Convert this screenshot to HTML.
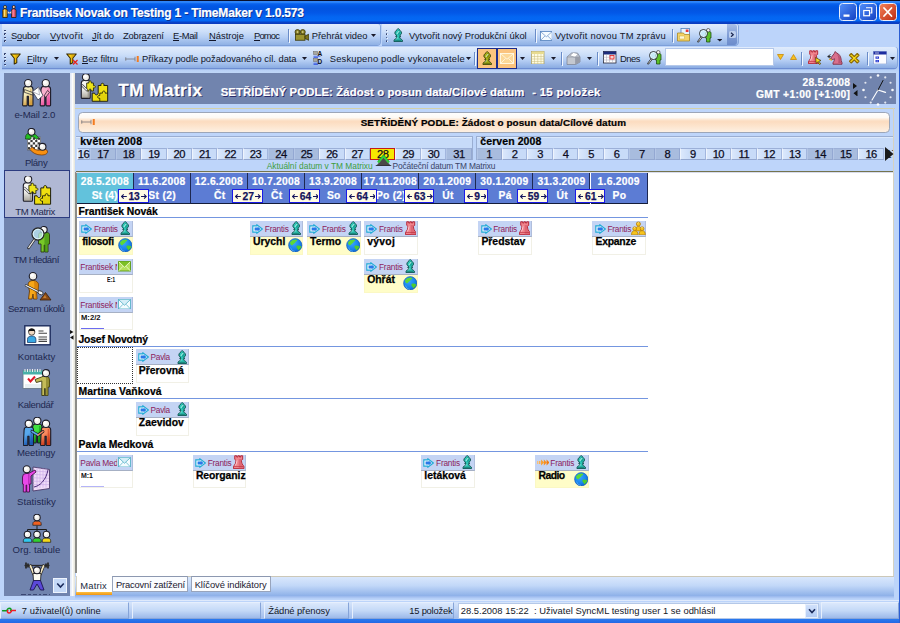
<!DOCTYPE html>
<html lang="cs"><head><meta charset="utf-8"><title>TimeMaker</title><style>
html,body{margin:0;padding:0}
body{width:900px;height:623px;overflow:hidden;position:relative;background:#bcd4fa;font-family:"Liberation Sans",sans-serif;font-size:9.4px}
#w{position:absolute;left:0;top:0;width:900px;height:623px;overflow:hidden}
#w div,#w span.t,#w svg{position:absolute}
#w span.t{white-space:nowrap}
u{text-decoration:underline}
</style></head><body><div id="w">
<div style="left:0px;top:0px;width:900px;height:23.7px;background:linear-gradient(#060a18 0,#0a1238 .8px,#2a80f8 1.300px,#3a90ff 2px,#1470f2 3px,#0a60ec 4px,#0058e6 6px,#0254e0 9px,#0358e8 13px,#0466f2 17px,#0468f4 20.500px,#0650d8 21.700px,#0a3cc0 22.800px,#0a3cc0 23.700px)"></div>
<span class="t" style="font-size:12px;line-height:14px;color:#fff;font-weight:bold;-webkit-text-stroke:.22px;letter-spacing:-0.170px;left:20px;top:5.899999999999999px;text-shadow:1px 1px 0 #0a2f8f;">Frantisek Novak on Testing 1 - TimeMaker v 1.0.573</span>
<div style="left:839px;top:3px;width:17.5px;height:18px;background:linear-gradient(135deg,#4a86f4 10%,#1a48c8 90%);border:1.200px solid #e8eefc;border-radius:3.500px;box-sizing:border-box"></div>
<svg style="left:839px;top:3px;" width="17.5" height="18" viewBox="0 0 35 36"><rect x="9" y="23" width="12" height="4.500" fill="#fff"/></svg>
<div style="left:859.2px;top:3px;width:17.5px;height:18px;background:linear-gradient(135deg,#4a86f4 10%,#1a48c8 90%);border:1.200px solid #e8eefc;border-radius:3.500px;box-sizing:border-box"></div>
<svg style="left:859.2px;top:3px;" width="17.5" height="18" viewBox="0 0 35 36"><path d="M14 9.500h11.500v10.500h-3" fill="none" stroke="#fff" stroke-width="2.400"/><rect x="9.500" y="15" width="11.500" height="10.500" fill="none" stroke="#fff" stroke-width="2.400"/></svg>
<div style="left:879.4px;top:3px;width:17.5px;height:18px;background:linear-gradient(135deg,#ee7850 10%,#c2341a 90%);border:1.200px solid #e8eefc;border-radius:3.500px;box-sizing:border-box"></div>
<svg style="left:879.4px;top:3px;" width="17.5" height="18" viewBox="0 0 35 36"><path d="M10 10l15 16M25 10l-15 16" stroke="#fff" stroke-width="3.600" stroke-linecap="round"/></svg>
<svg style="left:1.5px;top:5px;" width="15" height="13.5" viewBox="0 0 30 27"><g stroke="#2a1c08" stroke-width="1.600"><circle cx="6" cy="4" r="3" fill="#f8e8b0"/><path d="M1.500 10.500q0-3 4.500-3t4.500 3v14.500h-9z" fill="#e0a828"/><circle cx="23.500" cy="4" r="3" fill="#f8c8c0"/><path d="M19 10.500q0-3 4.500-3t4.500 3v14.500h-9z" fill="#e05870"/></g><path d="M5 9v14" stroke="#fff0a0" stroke-width="1.500"/><path d="M22.500 9v14" stroke="#f8a0b0" stroke-width="1.500"/><path d="M11.500 12l3.500 3 3.500-3v5h-7z" fill="#f4f4f8" stroke="#667" stroke-width=".8"/></svg>
<div style="left:0px;top:23.7px;width:900px;height:24px;background:#bcd4fa"></div>
<div style="left:0px;top:47px;width:900px;height:25.5px;background:linear-gradient(#bcd4fa 0%,#b2ccf5 80%,#c0d7f8 100%)"></div>
<div style="left:1.5px;top:23.7px;width:378.5px;height:21.5px;background:linear-gradient(#e1ecfc 0%,#cddff9 35%,#b4cdf3 65%,#8fb1e5 100%);border-radius:0 3px 3px 0;box-shadow:0 1px 0 #7d9fd9,1px 0 0 #86a6dc"></div>
<div style="left:381.5px;top:23.7px;width:356px;height:21.5px;background:linear-gradient(#e1ecfc 0%,#cddff9 35%,#b4cdf3 65%,#8fb1e5 100%);border-radius:0 3px 3px 0;box-shadow:0 1px 0 #7d9fd9,1px 0 0 #86a6dc"></div>
<div style="left:1.5px;top:47.3px;width:895.5px;height:20.4px;background:linear-gradient(#e1ecfc 0%,#cddff9 35%,#b4cdf3 65%,#8aace2 100%);border-radius:0 3px 3px 0;box-shadow:0 1.300px 0 #6e8ed2,1px 0 0 #86a6dc"></div>
<div style="left:17.01px;top:39.90px;width:5.23px;height:.9px;background:#12162a"></div>
<span class="t" style="font-size:9.4px;line-height:11px;color:#12162a;letter-spacing:-0.263px;left:11px;top:29.799999999999997px;">Soubor</span>
<div style="left:50.00px;top:39.90px;width:6.27px;height:.9px;background:#12162a"></div>
<span class="t" style="font-size:9.4px;line-height:11px;color:#12162a;letter-spacing:0.287px;left:50px;top:29.799999999999997px;">Vytvořit</span>
<div style="left:92.00px;top:39.90px;width:4.70px;height:.9px;background:#12162a"></div>
<span class="t" style="font-size:9.4px;line-height:11px;color:#12162a;letter-spacing:-0.198px;left:92px;top:29.799999999999997px;">Jít do</span>
<div style="left:141.67px;top:39.90px;width:5.23px;height:.9px;background:#12162a"></div>
<span class="t" style="font-size:9.4px;line-height:11px;color:#12162a;letter-spacing:-0.166px;left:123px;top:29.799999999999997px;">Zobrazení</span>
<div style="left:173.00px;top:39.90px;width:6.27px;height:.9px;background:#12162a"></div>
<span class="t" style="font-size:9.4px;line-height:11px;color:#12162a;letter-spacing:-0.327px;left:173px;top:29.799999999999997px;">E-Mail</span>
<div style="left:209.00px;top:39.90px;width:6.79px;height:.9px;background:#12162a"></div>
<span class="t" style="font-size:9.4px;line-height:11px;color:#12162a;letter-spacing:-0.000px;left:209px;top:29.799999999999997px;">Nástroje</span>
<div style="left:254.00px;top:39.90px;width:6.27px;height:.9px;background:#12162a"></div>
<span class="t" style="font-size:9.4px;line-height:11px;color:#12162a;letter-spacing:-0.814px;left:254px;top:29.799999999999997px;">Pomoc</span>
<span class="t" style="font-size:9.4px;line-height:11px;color:#12162a;letter-spacing:-0.009px;left:311.7px;top:29.799999999999997px;">Přehrát video</span>
<span class="t" style="font-size:9.4px;line-height:11px;color:#12162a;letter-spacing:-0.009px;left:409px;top:29.799999999999997px;">Vytvořit nový Produkční úkol</span>
<span class="t" style="font-size:9.4px;line-height:11px;color:#12162a;letter-spacing:0.215px;left:555px;top:29.799999999999997px;">Vytvořit novou TM zprávu</span>
<div style="left:27.00px;top:62.90px;width:5.74px;height:.9px;background:#12162a"></div>
<span class="t" style="font-size:9.4px;line-height:11px;color:#12162a;letter-spacing:0.028px;left:27px;top:52.8px;">Filtry</span>
<div style="left:82.00px;top:62.90px;width:6.27px;height:.9px;background:#12162a"></div>
<span class="t" style="font-size:9.4px;line-height:11px;color:#12162a;letter-spacing:-0.063px;left:82px;top:52.8px;">Bez filtru</span>
<span class="t" style="font-size:9.4px;line-height:11px;color:#12162a;letter-spacing:-0.051px;left:142px;top:52.8px;">Příkazy podle požadovaného cíl. data</span>
<span class="t" style="font-size:9.4px;line-height:11px;color:#12162a;letter-spacing:0.191px;left:329.7px;top:52.8px;">Seskupeno podle vykonavatele</span>
<span class="t" style="font-size:9.4px;line-height:11px;color:#12162a;letter-spacing:-0.515px;left:620px;top:52.8px;">Dnes</span>
<div style="left:665.3px;top:48.3px;width:108.7px;height:17.7px;background:#fff;border:1px solid #b4c8ea;box-sizing:border-box"></div>
<div style="left:477px;top:48px;width:20px;height:21px;background:#fbc47e;border:1px solid #1c2c8c;box-sizing:border-box"></div>
<div style="left:497px;top:48px;width:20px;height:21px;background:#fbc47e;border:1px solid #1c2c8c;box-sizing:border-box"></div>
<div style="left:3.8px;top:29.5px;width:1.8px;height:1.8px;background:#1c2858;border-radius:.4px"></div>
<div style="left:4.8px;top:30.5px;width:1.2px;height:1.2px;background:#f4f8ff;opacity:.9"></div>
<div style="left:3.8px;top:33.0px;width:1.8px;height:1.8px;background:#1c2858;border-radius:.4px"></div>
<div style="left:4.8px;top:34.0px;width:1.2px;height:1.2px;background:#f4f8ff;opacity:.9"></div>
<div style="left:3.8px;top:36.5px;width:1.8px;height:1.8px;background:#1c2858;border-radius:.4px"></div>
<div style="left:4.8px;top:37.5px;width:1.2px;height:1.2px;background:#f4f8ff;opacity:.9"></div>
<div style="left:3.8px;top:40.0px;width:1.8px;height:1.8px;background:#1c2858;border-radius:.4px"></div>
<div style="left:4.8px;top:41.0px;width:1.2px;height:1.2px;background:#f4f8ff;opacity:.9"></div>
<div style="left:385.5px;top:29.5px;width:1.8px;height:1.8px;background:#1c2858;border-radius:.4px"></div>
<div style="left:386.5px;top:30.5px;width:1.2px;height:1.2px;background:#f4f8ff;opacity:.9"></div>
<div style="left:385.5px;top:33.0px;width:1.8px;height:1.8px;background:#1c2858;border-radius:.4px"></div>
<div style="left:386.5px;top:34.0px;width:1.2px;height:1.2px;background:#f4f8ff;opacity:.9"></div>
<div style="left:385.5px;top:36.5px;width:1.8px;height:1.8px;background:#1c2858;border-radius:.4px"></div>
<div style="left:386.5px;top:37.5px;width:1.2px;height:1.2px;background:#f4f8ff;opacity:.9"></div>
<div style="left:385.5px;top:40.0px;width:1.8px;height:1.8px;background:#1c2858;border-radius:.4px"></div>
<div style="left:386.5px;top:41.0px;width:1.2px;height:1.2px;background:#f4f8ff;opacity:.9"></div>
<div style="left:3.8px;top:53.0px;width:1.8px;height:1.8px;background:#1c2858;border-radius:.4px"></div>
<div style="left:4.8px;top:54.0px;width:1.2px;height:1.2px;background:#f4f8ff;opacity:.9"></div>
<div style="left:3.8px;top:56.5px;width:1.8px;height:1.8px;background:#1c2858;border-radius:.4px"></div>
<div style="left:4.8px;top:57.5px;width:1.2px;height:1.2px;background:#f4f8ff;opacity:.9"></div>
<div style="left:3.8px;top:60.0px;width:1.8px;height:1.8px;background:#1c2858;border-radius:.4px"></div>
<div style="left:4.8px;top:61.0px;width:1.2px;height:1.2px;background:#f4f8ff;opacity:.9"></div>
<div style="left:3.8px;top:63.5px;width:1.8px;height:1.8px;background:#1c2858;border-radius:.4px"></div>
<div style="left:4.8px;top:64.5px;width:1.2px;height:1.2px;background:#f4f8ff;opacity:.9"></div>
<div style="left:288px;top:28.5px;width:1px;height:13px;background:#6a8cc8"></div>
<div style="left:289px;top:29.5px;width:1px;height:13px;background:#f2f7ff"></div>
<div style="left:534.5px;top:28.5px;width:1px;height:13px;background:#6a8cc8"></div>
<div style="left:535.5px;top:29.5px;width:1px;height:13px;background:#f2f7ff"></div>
<div style="left:671.5px;top:28.5px;width:1px;height:13px;background:#6a8cc8"></div>
<div style="left:672.5px;top:29.5px;width:1px;height:13px;background:#f2f7ff"></div>
<svg style="left:371.3px;top:33.5px;" width="5" height="3" viewBox="0 0 10 6"><path d="M0 0h10L5 6z" fill="#1a1a2a"/></svg>
<svg style="left:293.5px;top:29px;" width="15.5" height="12" viewBox="0 0 31 24"><circle cx="7" cy="6" r="5" fill="#8c8428" stroke="#3a3608" stroke-width="1.600"/><circle cx="17.500" cy="6" r="5" fill="#8c8428" stroke="#3a3608" stroke-width="1.600"/><circle cx="7" cy="6" r="1.600" fill="#e8e4b0"/><circle cx="17.500" cy="6" r="1.600" fill="#e8e4b0"/><rect x="3" y="10.500" width="19" height="12" fill="#9c9430" stroke="#3a3608" stroke-width="1.600"/><path d="M22 14l7.500-3.500v12L22 19z" fill="#7c7420" stroke="#3a3608" stroke-width="1.600" stroke-linejoin="round"/></svg>
<svg style="left:393.2px;top:28.3px;" width="10.4" height="14.2" viewBox="0 0 20 28"><path d="M10 1C12 3.500 16.500 6 16.500 9.800 16.500 12.200 14.700 13.600 13 14.500L14.600 15.600V17.200H12.600C12.900 19.600 14 21.400 16.400 22.400L18.200 24V27H1.800V24L3.600 22.400C6 21.400 7.100 19.600 7.400 17.200H5.400V15.600L7 14.500C5.300 13.600 3.500 12.200 3.500 9.800 3.500 6 8 3.500 10 1Z" fill="#2ec6b6" stroke="#0a4a48" stroke-width="1.900" stroke-linejoin="round"/><path d="M10 3.500c2 2 4.500 3.800 4.500 6.300 0 2.200-2 3.400-4.500 4z" fill="#0e8a80" opacity=".6"/><path d="M11.500 6.500L8 11" stroke="#d8fff8" stroke-width="1.700" fill="none" stroke-linecap="round"/><path d="M4 24.200h12" stroke="#0a4a48" stroke-width="1.300"/><path d="M8.500 18c-.3 2-1.200 3.500-2.800 4.600" stroke="#aef4e8" stroke-width="1.200" fill="none"/></svg>
<svg style="left:539.8px;top:31.2px;" width="12.7" height="10" viewBox="0 0 27 21"><rect x="1" y="1" width="25" height="19" fill="#f6fbff" stroke="#5a86c0" stroke-width="1.800"/><path d="M1.500 1.500L13.500 12 25.500 1.500M1.500 19.500l9-9M25.500 19.500l-9-9" fill="none" stroke="#5a86c0" stroke-width="1.400"/></svg>
<svg style="left:676.5px;top:28px;" width="15.5" height="13.5" viewBox="0 0 31 27"><rect x="8" y="1" width="17" height="15" fill="#eaf6ff" stroke="#4a7ab8" stroke-width="1.500"/><rect x="17.500" y="3" width="5.500" height="5" fill="#e83838"/><path d="M1 10h12l2 3h10v13H1z" fill="#f4d468" stroke="#a8841c" stroke-width="1.500" stroke-linejoin="round"/><rect x="5" y="16" width="10" height="6" fill="#fff8d8" stroke="#c8a83c" stroke-width="1"/></svg>
<svg style="left:697px;top:27.5px;" width="15.5" height="15" viewBox="0 0 31 30"><path d="M17 10q0-3 3-3h5q3 0 3 3v10h-2v8h-7v-8h-2z" fill="#5cc028" stroke="#1c4a10" stroke-width="1.500" stroke-linejoin="round"/><circle cx="22.500" cy="4.500" r="3.500" fill="#f4f4f0" stroke="#222" stroke-width="1.200"/><path d="M10 17L2.500 27" stroke="#222" stroke-width="4" stroke-linecap="round"/><path d="M10 17L3 26.500" stroke="#d8d8d8" stroke-width="1.800" stroke-linecap="round"/><circle cx="13" cy="11" r="8" fill="#c8ecf8" fill-opacity=".8" stroke="#222" stroke-width="1.800"/><circle cx="13" cy="11" r="6" fill="none" stroke="#f0fcff" stroke-width="1.200"/></svg>
<svg style="left:716.5px;top:39px;" width="5.5" height="2.5" viewBox="0 0 11 5"><path d="M0 0h11L5.500 5z" fill="#1a1a2a"/></svg>
<div style="left:727.3px;top:24.2px;width:9.8px;height:21px;background:linear-gradient(#a9bfe8,#7f9cd4 55%,#6c8ccc);border-radius:0 3px 3px 0"></div>
<div style="left:729px;top:30.5px;width:6.5px;height:7.5px;background:#bccfee;border-radius:1.500px"></div>
<svg style="left:730.2px;top:31.5px;" width="4.5" height="5.5" viewBox="0 0 9 11"><path d="M2 1.500l4.500 4-4.500 4" fill="none" stroke="#18244e" stroke-width="2.400"/></svg>
<svg style="left:10.3px;top:52.5px;" width="12.5" height="12.5" viewBox="0 0 25 25"><path d="M1.500 2h19l-7 8.500v9l-5 2.500v-11.500z" fill="#f8cc14" stroke="#3a2c04" stroke-width="2.200" stroke-linejoin="round"/><path d="M11 3.500h6.500l-5 6.500v8.500l-1.500.8z" fill="#c89008" opacity=".55"/></svg>
<svg style="left:54px;top:57.3px;" width="5" height="3" viewBox="0 0 10 6"><path d="M0 0h10L5 6z" fill="#1a1a2a"/></svg>
<svg style="left:66px;top:52.5px;" width="12.5" height="12.5" viewBox="0 0 25 25"><path d="M1.500 2h19l-7 8.500v9l-5 2.500v-11.500z" fill="#f8cc14" stroke="#3a2c04" stroke-width="2.200" stroke-linejoin="round"/><path d="M11 3.500h6.500l-5 6.500v8.500l-1.500.8z" fill="#c89008" opacity=".55"/><path d="M14 14l9 9M23 14l-9 9" stroke="#e82018" stroke-width="2.400"/></svg>
<svg style="left:125px;top:55.5px;" width="14.5" height="6" viewBox="0 0 29 12"><path d="M1 6h19M1.500 2.500v7M20 1.500v9" stroke="#707078" stroke-width="1.500"/><rect x="23.500" y="0" width="4" height="12" fill="#f47c20"/></svg>
<svg style="left:301.5px;top:57.3px;" width="5" height="3" viewBox="0 0 10 6"><path d="M0 0h10L5 6z" fill="#1a1a2a"/></svg>
<svg style="left:312.5px;top:51px;" width="10.5" height="14.5" viewBox="0 0 21 29"><rect x="1" y="1" width="8" height="6" fill="#a8a8a0" stroke="#666" stroke-width="1"/><rect x="1" y="15" width="8" height="6" fill="#a8a8a0" stroke="#666" stroke-width="1"/><path d="M1 10.500h14M1 13h9M1 24.500h14M1 27h9" stroke="#2a4ae0" stroke-width="1.500"/></svg>
<span class="t" style="left:317.500px;top:50px;font-size:6.500px;line-height:7px;font-weight:bold;color:#111">A</span><span class="t" style="left:317.500px;top:57.500px;font-size:6.500px;line-height:7px;font-weight:bold;color:#111">D</span>
<svg style="left:465.5px;top:57.3px;" width="5" height="3" viewBox="0 0 10 6"><path d="M0 0h10L5 6z" fill="#1a1a2a"/></svg>
<div style="left:474px;top:52px;width:1px;height:13px;background:#6a8cc8"></div>
<div style="left:475px;top:53px;width:1px;height:13px;background:#f2f7ff"></div>
<div style="left:560.5px;top:52px;width:1px;height:13px;background:#6a8cc8"></div>
<div style="left:561.5px;top:53px;width:1px;height:13px;background:#f2f7ff"></div>
<div style="left:597px;top:52px;width:1px;height:13px;background:#6a8cc8"></div>
<div style="left:598px;top:53px;width:1px;height:13px;background:#f2f7ff"></div>
<div style="left:800.5px;top:52px;width:1px;height:13px;background:#6a8cc8"></div>
<div style="left:801.5px;top:53px;width:1px;height:13px;background:#f2f7ff"></div>
<div style="left:866.5px;top:52px;width:1px;height:13px;background:#6a8cc8"></div>
<div style="left:867.5px;top:53px;width:1px;height:13px;background:#f2f7ff"></div>
<svg style="left:520px;top:57.3px;" width="5" height="3" viewBox="0 0 10 6"><path d="M0 0h10L5 6z" fill="#1a1a2a"/></svg>
<svg style="left:550.5px;top:57.3px;" width="5" height="3" viewBox="0 0 10 6"><path d="M0 0h10L5 6z" fill="#1a1a2a"/></svg>
<svg style="left:586.5px;top:57.3px;" width="5" height="3" viewBox="0 0 10 6"><path d="M0 0h10L5 6z" fill="#1a1a2a"/></svg>
<svg style="left:889.5px;top:57.3px;" width="5" height="3" viewBox="0 0 10 6"><path d="M0 0h10L5 6z" fill="#1a1a2a"/></svg>
<svg style="left:531px;top:50.8px;" width="13.5" height="13.5" viewBox="0 0 27 27"><rect x="1" y="1" width="25" height="25" fill="#fffce0" stroke="#a89c5c" stroke-width="1.500"/><rect x="1" y="1" width="25" height="5" fill="#e8dc90"/><path d="M7 6v20M13.500 6v20M20 6v20M1 11h25M1 16h25M1 21h25" stroke="#c8bc7c" stroke-width="1"/></svg>
<svg style="left:565.5px;top:50.5px;" width="15" height="14" viewBox="0 0 30 28"><path d="M2 12l9-8h12l5 8v10l-9 5H2z" fill="#c4c8d0" stroke="#7a8090" stroke-width="1.400" stroke-linejoin="round"/><path d="M8 9l7-6 9 3-6 7z" fill="#fff" stroke="#8a90a0" stroke-width="1"/><path d="M2 12h17l9 0M19 12v15" fill="none" stroke="#8a90a0" stroke-width="1.200"/><path d="M19 12l9 0v10l-9 5z" fill="#989ca8"/></svg>
<svg style="left:603px;top:51.2px;" width="13.5" height="12.5" viewBox="0 0 27 25"><rect x="1" y="1" width="25" height="23" fill="#fff" stroke="#2a2a3a" stroke-width="1.600"/><rect x="1" y="1" width="25" height="6" fill="#1c2c7c"/><path d="M7 7v17M13 7v17M19 7v17M1 12.500h25M1 18h25" stroke="#a8a8b8" stroke-width="1"/><rect x="14" y="9" width="8" height="7" fill="#f8d0d0" stroke="#e02020" stroke-width="1.600"/></svg>
<svg style="left:647px;top:50px;" width="15.5" height="15" viewBox="0 0 31 30"><path d="M17 10q0-3 3-3h5q3 0 3 3v10h-2v8h-7v-8h-2z" fill="#5cc028" stroke="#1c4a10" stroke-width="1.500" stroke-linejoin="round"/><circle cx="22.500" cy="4.500" r="3.500" fill="#f4f4f0" stroke="#222" stroke-width="1.200"/><path d="M10 17L2.500 27" stroke="#222" stroke-width="4" stroke-linecap="round"/><path d="M10 17L3 26.500" stroke="#d8d8d8" stroke-width="1.800" stroke-linecap="round"/><circle cx="13" cy="11" r="8" fill="#c8ecf8" fill-opacity=".8" stroke="#222" stroke-width="1.800"/><circle cx="13" cy="11" r="6" fill="none" stroke="#f0fcff" stroke-width="1.200"/></svg>
<svg style="left:777.3px;top:54px;" width="7" height="6" viewBox="0 0 14 12"><path d="M1 1h12L7 11z" fill="#f8c020" stroke="#c88a08" stroke-width="1.600" stroke-linejoin="round"/></svg>
<svg style="left:789.5px;top:54px;" width="7" height="6" viewBox="0 0 14 12"><path d="M1 11h12L7 1z" fill="#f8c020" stroke="#c88a08" stroke-width="1.600" stroke-linejoin="round"/></svg>
<svg style="left:808px;top:50px;" width="11.4" height="14.4" viewBox="0 0 23 29"><path d="M3.500 1.500h4v2.600h2.300V1.500h3.400v2.600h2.300V1.500h4v7.300l-2.600 2.400c.3 4 1.300 7 3.200 9.600 1.300.6 2 1.400 2 2.600v4.100H.9v-4.100c0-1.200.7-2 2-2.600 1.900-2.600 2.900-5.600 3.200-9.600L3.500 8.800z" fill="#f0848c" stroke="#b42434" stroke-width="1.900" stroke-linejoin="round"/><path d="M11.500 8v19h9.600v-3.300c-3-3-4.600-7.500-4.900-12.700l2.300-2.200V8z" fill="#d05060" opacity=".55"/><path d="M8 11.500c-.3 3.500-1.200 6.500-2.800 9" stroke="#ffd8dc" stroke-width="1.800" fill="none" stroke-linecap="round"/><path d="M2 23.200h19" stroke="#b42434" stroke-width="1.100"/></svg>
<svg style="left:815px;top:57px;" width="7.5" height="8" viewBox="0 0 15 16"><path d="M1 1l11 6-4.500 1.500 4 5-2.500 1.500-3.500-5.500L2.500 13z" fill="#f8e020" stroke="#3a3000" stroke-width="1.300" stroke-linejoin="round"/></svg>
<svg style="left:826.5px;top:50px;" width="17.5" height="15" viewBox="0 0 35 30"><path d="M12 28.500v-3c2-3 3-5 3-8-2 1.500-4 2-6 1l-1.500-2.500 7-9 2-4 2 2.500c6 2 10 8 10 16l1.500 4v3z" fill="#d8708c" stroke="#7a2840" stroke-width="1.700" stroke-linejoin="round"/><path d="M20 8c5 3 7 8 7 14l1.500 4h-6c1-6 .5-12-2.500-18z" fill="#a84060" opacity=".6"/><path d="M7 9L1.500 13l5.500 4M1.500 13h6" fill="none" stroke="#222" stroke-width="1.800"/><path d="M4 19l4-1 .5 4" fill="none" stroke="#e8a800" stroke-width="1.800"/></svg>
<svg style="left:848px;top:52px;" width="12.5" height="12.5" viewBox="0 0 25 25"><path d="M3 6.500L6.500 3l6 6 6-6L22 6.500l-6 6 6 6-3.500 3.500-6-6-6 6L3 18.500l6-6z" fill="#f8d818" stroke="#8a6a08" stroke-width="2.200" stroke-linejoin="round"/></svg>
<svg style="left:872.5px;top:50.5px;" width="14" height="13.5" viewBox="0 0 28 27"><rect x="1" y="1" width="26" height="25" fill="#fcfcff" stroke="#8aa0d0" stroke-width="1.400"/><rect x="1" y="1" width="26" height="6" fill="#1c2ca0"/><path d="M4 4h8" stroke="#fff" stroke-width="1.400"/><rect x="5" y="11" width="7" height="4.500" fill="#2a3ad0"/><rect x="5" y="18" width="7" height="4.500" fill="#2a3ad0"/><path d="M7 13.200h3M7 20.200h3" stroke="#fff" stroke-width="1"/></svg>
<svg style="left:481.8px;top:50.8px;" width="10.4" height="14.2" viewBox="0 0 20 28"><path d="M10 1C12 3.500 16.500 6 16.500 9.800 16.500 12.200 14.700 13.600 13 14.500L14.600 15.600V17.200H12.600C12.900 19.600 14 21.400 16.400 22.400L18.200 24V27H1.800V24L3.600 22.400C6 21.400 7.100 19.600 7.400 17.200H5.400V15.600L7 14.500C5.300 13.600 3.500 12.200 3.500 9.800 3.500 6 8 3.500 10 1Z" fill="#a8b018" stroke="#3a4008" stroke-width="1.900" stroke-linejoin="round"/><path d="M10 3.500c2 2 4.500 3.800 4.500 6.300 0 2.200-2 3.400-4.500 4z" fill="#6a7408" opacity=".6"/><path d="M11.500 6.500L8 11" stroke="#d8fff8" stroke-width="1.700" fill="none" stroke-linecap="round"/><path d="M4 24.200h12" stroke="#3a4008" stroke-width="1.300"/><path d="M8.500 18c-.3 2-1.200 3.500-2.800 4.600" stroke="#aef4e8" stroke-width="1.200" fill="none"/></svg>
<svg style="left:500px;top:52.5px;" width="14" height="11" viewBox="0 0 28 22"><rect x="1" y="1" width="26" height="20" fill="#fcd898" stroke="#fffbe8" stroke-width="1.800"/><path d="M1.500 1.500L14 12.500 26.500 1.500M1.500 20.500l9.500-9.500M26.500 20.500L17 11" fill="none" stroke="#fffbe8" stroke-width="1.600"/></svg>
<div style="left:4px;top:72.5px;width:65.8px;height:523px;background:#7184ae"></div>
<div style="left:4.2px;top:170.3px;width:65.6px;height:48px;background:#b0b8d4;border:1.300px solid #2c3c80;box-sizing:border-box"></div>
<span class="t" style="font-size:9.6px;line-height:11px;color:#1e2850;letter-spacing:-0.128px;left:14.4px;top:109.2px;">e-Mail 2.0</span>
<span class="t" style="font-size:9.6px;line-height:11px;color:#1e2850;letter-spacing:-0.304px;left:24.9px;top:157.3px;">Plány</span>
<span class="t" style="font-size:9.6px;line-height:11px;color:#1e2850;letter-spacing:-0.308px;left:15.2px;top:205.5px;">TM Matrix</span>
<span class="t" style="font-size:9.6px;line-height:11px;color:#1e2850;letter-spacing:-0.424px;left:13.6px;top:254px;">TM Hledání</span>
<span class="t" style="font-size:9.6px;line-height:11px;color:#1e2850;letter-spacing:-0.349px;left:8px;top:302.5px;">Seznam úkolů</span>
<span class="t" style="font-size:9.6px;line-height:11px;color:#1e2850;letter-spacing:0.049px;left:17.7px;top:350.7px;">Kontakty</span>
<span class="t" style="font-size:9.6px;line-height:11px;color:#1e2850;letter-spacing:-0.333px;left:17.7px;top:398.7px;">Kalendář</span>
<span class="t" style="font-size:9.6px;line-height:11px;color:#1e2850;letter-spacing:-0.065px;left:16.9px;top:447.2px;">Meetingy</span>
<span class="t" style="font-size:9.6px;line-height:11px;color:#1e2850;letter-spacing:0.043px;left:17px;top:495.7px;">Statistiky</span>
<span class="t" style="font-size:9.6px;line-height:11px;color:#1e2850;letter-spacing:0.041px;left:12.5px;top:543.6px;">Org. tabule</span>
<div style="left:74.8px;top:72.5px;width:821px;height:31.3px;background:#7184ae"></div>
<span class="t" style="font-size:17px;line-height:19px;color:#fff;font-weight:bold;-webkit-text-stroke:.22px;letter-spacing:0.545px;left:118.3px;top:80.5px;text-shadow:1px 1px 0 #1c2450;-webkit-text-stroke:.3px #fff;">TM Matrix</span>
<span class="t" style="font-size:11.3px;line-height:12px;color:#fff;font-weight:bold;-webkit-text-stroke:.22px;letter-spacing:0.114px;left:220.7px;top:85.6px;text-shadow:1px 1px 0 #2a2a6a;">SETŘÍDĚNÝ PODLE: Žádost o posun data/Cílové datum</span>
<span class="t" style="font-size:11.3px;line-height:12px;color:#fff;font-weight:bold;-webkit-text-stroke:.22px;letter-spacing:0.320px;left:532.2px;top:85.6px;text-shadow:1px 1px 0 #2a2a6a;">- 15 položek</span>
<span class="t" style="font-size:10.3px;line-height:11px;color:#fff;font-weight:bold;-webkit-text-stroke:.22px;letter-spacing:0.210px;left:802.5px;top:77.3px;">28.5.2008</span>
<span class="t" style="font-size:10.3px;line-height:11px;color:#fff;font-weight:bold;-webkit-text-stroke:.22px;letter-spacing:0.329px;left:756px;top:88.6px;">GMT +1:00 [+1:00]</span>
<div style="left:69.8px;top:72.5px;width:5.2px;height:523px;background:linear-gradient(90deg,#dfe8f7 0%,#eef2fa 35%,#fdfdfc 50%,#f2f2ec 70%,#e4e2d8 100%)"></div>
<div style="left:74.8px;top:107.7px;width:820px;height:1.5px;background:#d4d0aa"></div>
<div style="left:76px;top:109.2px;width:817.3px;height:0.8px;background:#a4b4da"></div>
<div style="left:893.3px;top:108px;width:1.2px;height:469px;background:#d6d2c0"></div>
<div style="left:76px;top:109px;width:817.3px;height:468px;background:#fff"></div>
<div style="left:75px;top:172px;width:1.6px;height:401px;background:#8c8c88"></div>
<div style="left:112.3px;top:576.3px;width:782px;height:1px;background:#ccc8b8"></div>
<div style="left:76px;top:109.3px;width:817.3px;height:62.5px;background:#bed5fa"></div>
<div style="left:78.3px;top:112.4px;width:812.2px;height:20.2px;background:linear-gradient(#fefefe 0%,#fdf9f4 24%,#fce2ca 38%,#fcdcc0 46%,#fde5ce 70%,#fdf0e2 100%);border:1px solid #9ca6b8;border-radius:4.500px;box-sizing:border-box"></div>
<svg style="left:80.8px;top:118.5px;" width="14.5" height="6" viewBox="0 0 29 12"><path d="M1 6h19M1.500 2.500v7M20 1.500v9" stroke="#707078" stroke-width="1.500"/><rect x="23.500" y="0" width="4" height="12" fill="#f47c20"/></svg>
<span class="t" style="font-size:9.9px;line-height:11px;color:#000;font-weight:bold;-webkit-text-stroke:.22px;letter-spacing:0.098px;left:360.7px;top:117px;">SETŘÍDĚNÝ PODLE: Žádost o posun data/Cílové datum</span>
<div style="left:76px;top:136px;width:396.5px;height:24.3px;background:#c7dbf9;border-top:1px solid #9aaed2;border-right:1px solid #9aaed2;box-sizing:border-box"></div>
<div style="left:76px;top:137px;width:395.5px;height:1px;background:#dce9fc"></div>
<div style="left:476px;top:136px;width:417.3px;height:24.3px;background:#c7dbf9;border-top:1px solid #9aaed2;border-left:1px solid #9aaed2;box-sizing:border-box"></div>
<div style="left:477px;top:137px;width:416.3px;height:1px;background:#dce9fc"></div>
<div style="left:76px;top:171.4px;width:817.3px;height:1px;background:#74744e"></div>
<div style="left:76px;top:172.3px;width:817.3px;height:0.7px;background:#d8dcec"></div>
<span class="t" style="font-size:10.5px;line-height:12px;color:#000;font-weight:bold;-webkit-text-stroke:.22px;letter-spacing:0.215px;left:80.3px;top:135.3px;">květen 2008</span>
<span class="t" style="font-size:10.5px;line-height:12px;color:#000;font-weight:bold;-webkit-text-stroke:.22px;letter-spacing:0.086px;left:480.3px;top:135.3px;">červen 2008</span>
<div style="left:76.7px;top:147.5px;width:13.599999999999994px;height:12.5px;background:linear-gradient(90deg,#dbe8fc,#c8dbf8 40%);border-left:1px solid #eef4fd;border-right:1px solid #a2b6de;border-top:.7px solid #9cb0d8;border-bottom:.7px solid #94a8d0;box-sizing:border-box"></div>
<span class="t" style="font-size:11.2px;line-height:12px;color:#0c0c1e;left:-66.5px;width:300px;text-align:center;top:147.5px;letter-spacing:-.5px;-webkit-text-stroke:.25px;">16</span>
<div style="left:90.3px;top:147.5px;width:25.429999999999993px;height:12.5px;background:#a8bcde;border-left:1px solid #b4c6e6;border-right:1px solid #94a8d2;border-top:.7px solid #9cb0d8;border-bottom:.7px solid #94a8d0;box-sizing:border-box"></div>
<span class="t" style="font-size:11.2px;line-height:12px;color:#0c0c1e;left:-46.985000000000014px;width:300px;text-align:center;top:147.5px;letter-spacing:-.5px;-webkit-text-stroke:.25px;">17</span>
<div style="left:115.72999999999999px;top:147.5px;width:25.430000000000007px;height:12.5px;background:#a8bcde;border-left:1px solid #b4c6e6;border-right:1px solid #94a8d2;border-top:.7px solid #9cb0d8;border-bottom:.7px solid #94a8d0;box-sizing:border-box"></div>
<span class="t" style="font-size:11.2px;line-height:12px;color:#0c0c1e;left:-21.555000000000007px;width:300px;text-align:center;top:147.5px;letter-spacing:-.5px;-webkit-text-stroke:.25px;">18</span>
<div style="left:141.16px;top:147.5px;width:25.42999999999998px;height:12.5px;background:linear-gradient(90deg,#dbe8fc,#c8dbf8 40%);border-left:1px solid #eef4fd;border-right:1px solid #a2b6de;border-top:.7px solid #9cb0d8;border-bottom:.7px solid #94a8d0;box-sizing:border-box"></div>
<span class="t" style="font-size:11.2px;line-height:12px;color:#0c0c1e;left:3.875px;width:300px;text-align:center;top:147.5px;letter-spacing:-.5px;-webkit-text-stroke:.25px;">19</span>
<div style="left:166.58999999999997px;top:147.5px;width:25.430000000000007px;height:12.5px;background:linear-gradient(90deg,#dbe8fc,#c8dbf8 40%);border-left:1px solid #eef4fd;border-right:1px solid #a2b6de;border-top:.7px solid #9cb0d8;border-bottom:.7px solid #94a8d0;box-sizing:border-box"></div>
<span class="t" style="font-size:11.2px;line-height:12px;color:#0c0c1e;left:29.30499999999998px;width:300px;text-align:center;top:147.5px;letter-spacing:-.5px;-webkit-text-stroke:.25px;">20</span>
<div style="left:192.01999999999998px;top:147.5px;width:25.430000000000007px;height:12.5px;background:linear-gradient(90deg,#dbe8fc,#c8dbf8 40%);border-left:1px solid #eef4fd;border-right:1px solid #a2b6de;border-top:.7px solid #9cb0d8;border-bottom:.7px solid #94a8d0;box-sizing:border-box"></div>
<span class="t" style="font-size:11.2px;line-height:12px;color:#0c0c1e;left:54.734999999999985px;width:300px;text-align:center;top:147.5px;letter-spacing:-.5px;-webkit-text-stroke:.25px;">21</span>
<div style="left:217.45px;top:147.5px;width:25.430000000000007px;height:12.5px;background:linear-gradient(90deg,#dbe8fc,#c8dbf8 40%);border-left:1px solid #eef4fd;border-right:1px solid #a2b6de;border-top:.7px solid #9cb0d8;border-bottom:.7px solid #94a8d0;box-sizing:border-box"></div>
<span class="t" style="font-size:11.2px;line-height:12px;color:#0c0c1e;left:80.16499999999999px;width:300px;text-align:center;top:147.5px;letter-spacing:-.5px;-webkit-text-stroke:.25px;">22</span>
<div style="left:242.88px;top:147.5px;width:25.430000000000007px;height:12.5px;background:linear-gradient(90deg,#dbe8fc,#c8dbf8 40%);border-left:1px solid #eef4fd;border-right:1px solid #a2b6de;border-top:.7px solid #9cb0d8;border-bottom:.7px solid #94a8d0;box-sizing:border-box"></div>
<span class="t" style="font-size:11.2px;line-height:12px;color:#0c0c1e;left:105.595px;width:300px;text-align:center;top:147.5px;letter-spacing:-.5px;-webkit-text-stroke:.25px;">23</span>
<div style="left:268.31px;top:147.5px;width:25.430000000000007px;height:12.5px;background:#a8bcde;border-left:1px solid #b4c6e6;border-right:1px solid #94a8d2;border-top:.7px solid #9cb0d8;border-bottom:.7px solid #94a8d0;box-sizing:border-box"></div>
<span class="t" style="font-size:11.2px;line-height:12px;color:#0c0c1e;left:131.02499999999998px;width:300px;text-align:center;top:147.5px;letter-spacing:-.5px;-webkit-text-stroke:.25px;">24</span>
<div style="left:293.74px;top:147.5px;width:25.430000000000007px;height:12.5px;background:#a8bcde;border-left:1px solid #b4c6e6;border-right:1px solid #94a8d2;border-top:.7px solid #9cb0d8;border-bottom:.7px solid #94a8d0;box-sizing:border-box"></div>
<span class="t" style="font-size:11.2px;line-height:12px;color:#0c0c1e;left:156.45500000000004px;width:300px;text-align:center;top:147.5px;letter-spacing:-.5px;-webkit-text-stroke:.25px;">25</span>
<div style="left:319.17px;top:147.5px;width:25.430000000000007px;height:12.5px;background:linear-gradient(90deg,#dbe8fc,#c8dbf8 40%);border-left:1px solid #eef4fd;border-right:1px solid #a2b6de;border-top:.7px solid #9cb0d8;border-bottom:.7px solid #94a8d0;box-sizing:border-box"></div>
<span class="t" style="font-size:11.2px;line-height:12px;color:#0c0c1e;left:181.885px;width:300px;text-align:center;top:147.5px;letter-spacing:-.5px;-webkit-text-stroke:.25px;">26</span>
<div style="left:344.6px;top:147.5px;width:25.430000000000007px;height:12.5px;background:linear-gradient(90deg,#dbe8fc,#c8dbf8 40%);border-left:1px solid #eef4fd;border-right:1px solid #a2b6de;border-top:.7px solid #9cb0d8;border-bottom:.7px solid #94a8d0;box-sizing:border-box"></div>
<span class="t" style="font-size:11.2px;line-height:12px;color:#0c0c1e;left:207.31500000000005px;width:300px;text-align:center;top:147.5px;letter-spacing:-.5px;-webkit-text-stroke:.25px;">27</span>
<div style="left:370.03000000000003px;top:147.8px;width:25.42999999999995px;height:12.7px;background:#f6e800;border:1.900px solid #c21a18;box-sizing:border-box"></div>
<span class="t" style="font-size:11.2px;line-height:12px;color:#0c0c1e;left:232.745px;width:300px;text-align:center;top:147.5px;letter-spacing:-.5px;-webkit-text-stroke:.25px;">28</span>
<div style="left:395.46px;top:147.5px;width:25.430000000000007px;height:12.5px;background:linear-gradient(90deg,#dbe8fc,#c8dbf8 40%);border-left:1px solid #eef4fd;border-right:1px solid #a2b6de;border-top:.7px solid #9cb0d8;border-bottom:.7px solid #94a8d0;box-sizing:border-box"></div>
<span class="t" style="font-size:11.2px;line-height:12px;color:#0c0c1e;left:258.17499999999995px;width:300px;text-align:center;top:147.5px;letter-spacing:-.5px;-webkit-text-stroke:.25px;">29</span>
<div style="left:420.89px;top:147.5px;width:25.430000000000007px;height:12.5px;background:linear-gradient(90deg,#dbe8fc,#c8dbf8 40%);border-left:1px solid #eef4fd;border-right:1px solid #a2b6de;border-top:.7px solid #9cb0d8;border-bottom:.7px solid #94a8d0;box-sizing:border-box"></div>
<span class="t" style="font-size:11.2px;line-height:12px;color:#0c0c1e;left:283.605px;width:300px;text-align:center;top:147.5px;letter-spacing:-.5px;-webkit-text-stroke:.25px;">30</span>
<div style="left:446.32px;top:147.5px;width:25.430000000000007px;height:12.5px;background:#a8bcde;border-left:1px solid #b4c6e6;border-right:1px solid #94a8d2;border-top:.7px solid #9cb0d8;border-bottom:.7px solid #94a8d0;box-sizing:border-box"></div>
<span class="t" style="font-size:11.2px;line-height:12px;color:#0c0c1e;left:309.03499999999997px;width:300px;text-align:center;top:147.5px;letter-spacing:-.5px;-webkit-text-stroke:.25px;">31</span>
<div style="left:476.5px;top:147.5px;width:25.45999999999998px;height:12.5px;background:#a8bcde;border-left:1px solid #b4c6e6;border-right:1px solid #94a8d2;border-top:.7px solid #9cb0d8;border-bottom:.7px solid #94a8d0;box-sizing:border-box"></div>
<span class="t" style="font-size:11.2px;line-height:12px;color:#0c0c1e;left:339.23px;width:300px;text-align:center;top:147.5px;letter-spacing:-.5px;-webkit-text-stroke:.25px;">1</span>
<div style="left:501.96px;top:147.5px;width:25.45999999999998px;height:12.5px;background:linear-gradient(90deg,#dbe8fc,#c8dbf8 40%);border-left:1px solid #eef4fd;border-right:1px solid #a2b6de;border-top:.7px solid #9cb0d8;border-bottom:.7px solid #94a8d0;box-sizing:border-box"></div>
<span class="t" style="font-size:11.2px;line-height:12px;color:#0c0c1e;left:364.68999999999994px;width:300px;text-align:center;top:147.5px;letter-spacing:-.5px;-webkit-text-stroke:.25px;">2</span>
<div style="left:527.42px;top:147.5px;width:25.460000000000036px;height:12.5px;background:linear-gradient(90deg,#dbe8fc,#c8dbf8 40%);border-left:1px solid #eef4fd;border-right:1px solid #a2b6de;border-top:.7px solid #9cb0d8;border-bottom:.7px solid #94a8d0;box-sizing:border-box"></div>
<span class="t" style="font-size:11.2px;line-height:12px;color:#0c0c1e;left:390.15px;width:300px;text-align:center;top:147.5px;letter-spacing:-.5px;-webkit-text-stroke:.25px;">3</span>
<div style="left:552.88px;top:147.5px;width:25.460000000000036px;height:12.5px;background:linear-gradient(90deg,#dbe8fc,#c8dbf8 40%);border-left:1px solid #eef4fd;border-right:1px solid #a2b6de;border-top:.7px solid #9cb0d8;border-bottom:.7px solid #94a8d0;box-sizing:border-box"></div>
<span class="t" style="font-size:11.2px;line-height:12px;color:#0c0c1e;left:415.61px;width:300px;text-align:center;top:147.5px;letter-spacing:-.5px;-webkit-text-stroke:.25px;">4</span>
<div style="left:578.34px;top:147.5px;width:25.459999999999923px;height:12.5px;background:linear-gradient(90deg,#dbe8fc,#c8dbf8 40%);border-left:1px solid #eef4fd;border-right:1px solid #a2b6de;border-top:.7px solid #9cb0d8;border-bottom:.7px solid #94a8d0;box-sizing:border-box"></div>
<span class="t" style="font-size:11.2px;line-height:12px;color:#0c0c1e;left:441.06999999999994px;width:300px;text-align:center;top:147.5px;letter-spacing:-.5px;-webkit-text-stroke:.25px;">5</span>
<div style="left:603.8px;top:147.5px;width:25.460000000000036px;height:12.5px;background:linear-gradient(90deg,#dbe8fc,#c8dbf8 40%);border-left:1px solid #eef4fd;border-right:1px solid #a2b6de;border-top:.7px solid #9cb0d8;border-bottom:.7px solid #94a8d0;box-sizing:border-box"></div>
<span class="t" style="font-size:11.2px;line-height:12px;color:#0c0c1e;left:466.53px;width:300px;text-align:center;top:147.5px;letter-spacing:-.5px;-webkit-text-stroke:.25px;">6</span>
<div style="left:629.26px;top:147.5px;width:25.460000000000036px;height:12.5px;background:#a8bcde;border-left:1px solid #b4c6e6;border-right:1px solid #94a8d2;border-top:.7px solid #9cb0d8;border-bottom:.7px solid #94a8d0;box-sizing:border-box"></div>
<span class="t" style="font-size:11.2px;line-height:12px;color:#0c0c1e;left:491.99px;width:300px;text-align:center;top:147.5px;letter-spacing:-.5px;-webkit-text-stroke:.25px;">7</span>
<div style="left:654.72px;top:147.5px;width:25.460000000000036px;height:12.5px;background:#a8bcde;border-left:1px solid #b4c6e6;border-right:1px solid #94a8d2;border-top:.7px solid #9cb0d8;border-bottom:.7px solid #94a8d0;box-sizing:border-box"></div>
<span class="t" style="font-size:11.2px;line-height:12px;color:#0c0c1e;left:517.45px;width:300px;text-align:center;top:147.5px;letter-spacing:-.5px;-webkit-text-stroke:.25px;">8</span>
<div style="left:680.1800000000001px;top:147.5px;width:25.459999999999923px;height:12.5px;background:linear-gradient(90deg,#dbe8fc,#c8dbf8 40%);border-left:1px solid #eef4fd;border-right:1px solid #a2b6de;border-top:.7px solid #9cb0d8;border-bottom:.7px solid #94a8d0;box-sizing:border-box"></div>
<span class="t" style="font-size:11.2px;line-height:12px;color:#0c0c1e;left:542.9100000000001px;width:300px;text-align:center;top:147.5px;letter-spacing:-.5px;-webkit-text-stroke:.25px;">9</span>
<div style="left:705.64px;top:147.5px;width:25.460000000000036px;height:12.5px;background:linear-gradient(90deg,#dbe8fc,#c8dbf8 40%);border-left:1px solid #eef4fd;border-right:1px solid #a2b6de;border-top:.7px solid #9cb0d8;border-bottom:.7px solid #94a8d0;box-sizing:border-box"></div>
<span class="t" style="font-size:11.2px;line-height:12px;color:#0c0c1e;left:568.37px;width:300px;text-align:center;top:147.5px;letter-spacing:-.5px;-webkit-text-stroke:.25px;">10</span>
<div style="left:731.1px;top:147.5px;width:25.459999999999923px;height:12.5px;background:linear-gradient(90deg,#dbe8fc,#c8dbf8 40%);border-left:1px solid #eef4fd;border-right:1px solid #a2b6de;border-top:.7px solid #9cb0d8;border-bottom:.7px solid #94a8d0;box-sizing:border-box"></div>
<span class="t" style="font-size:11.2px;line-height:12px;color:#0c0c1e;left:593.8299999999999px;width:300px;text-align:center;top:147.5px;letter-spacing:-.5px;-webkit-text-stroke:.25px;">11</span>
<div style="left:756.56px;top:147.5px;width:25.460000000000036px;height:12.5px;background:linear-gradient(90deg,#dbe8fc,#c8dbf8 40%);border-left:1px solid #eef4fd;border-right:1px solid #a2b6de;border-top:.7px solid #9cb0d8;border-bottom:.7px solid #94a8d0;box-sizing:border-box"></div>
<span class="t" style="font-size:11.2px;line-height:12px;color:#0c0c1e;left:619.29px;width:300px;text-align:center;top:147.5px;letter-spacing:-.5px;-webkit-text-stroke:.25px;">12</span>
<div style="left:782.02px;top:147.5px;width:25.460000000000036px;height:12.5px;background:linear-gradient(90deg,#dbe8fc,#c8dbf8 40%);border-left:1px solid #eef4fd;border-right:1px solid #a2b6de;border-top:.7px solid #9cb0d8;border-bottom:.7px solid #94a8d0;box-sizing:border-box"></div>
<span class="t" style="font-size:11.2px;line-height:12px;color:#0c0c1e;left:644.75px;width:300px;text-align:center;top:147.5px;letter-spacing:-.5px;-webkit-text-stroke:.25px;">13</span>
<div style="left:807.48px;top:147.5px;width:25.460000000000036px;height:12.5px;background:#a8bcde;border-left:1px solid #b4c6e6;border-right:1px solid #94a8d2;border-top:.7px solid #9cb0d8;border-bottom:.7px solid #94a8d0;box-sizing:border-box"></div>
<span class="t" style="font-size:11.2px;line-height:12px;color:#0c0c1e;left:670.21px;width:300px;text-align:center;top:147.5px;letter-spacing:-.5px;-webkit-text-stroke:.25px;">14</span>
<div style="left:832.94px;top:147.5px;width:25.460000000000036px;height:12.5px;background:#a8bcde;border-left:1px solid #b4c6e6;border-right:1px solid #94a8d2;border-top:.7px solid #9cb0d8;border-bottom:.7px solid #94a8d0;box-sizing:border-box"></div>
<span class="t" style="font-size:11.2px;line-height:12px;color:#0c0c1e;left:695.6700000000001px;width:300px;text-align:center;top:147.5px;letter-spacing:-.5px;-webkit-text-stroke:.25px;">15</span>
<div style="left:858.4000000000001px;top:147.5px;width:25.459999999999923px;height:12.5px;background:linear-gradient(90deg,#dbe8fc,#c8dbf8 40%);border-left:1px solid #eef4fd;border-right:1px solid #a2b6de;border-top:.7px solid #9cb0d8;border-bottom:.7px solid #94a8d0;box-sizing:border-box"></div>
<span class="t" style="font-size:11.2px;line-height:12px;color:#0c0c1e;left:721.1300000000001px;width:300px;text-align:center;top:147.5px;letter-spacing:-.5px;-webkit-text-stroke:.25px;">16</span>
<div style="left:884px;top:147.5px;width:9px;height:12.5px;background:#c6d9f7"></div>
<span class="t" style="font-size:10px;line-height:11px;color:#1c1c30;left:886px;top:148.5px;width:7px;overflow:hidden;">17</span>
<svg style="left:885px;top:147px;" width="8.5" height="14" viewBox="0 0 17 28"><path d="M0 0l17 14L0 28z" fill="#1a1a1a"/></svg>
<span class="t" style="font-size:8.4px;line-height:10px;color:#3d9d3d;letter-spacing:-0.017px;left:266.7px;top:160.7px;">Aktuální datum v TM Matrixu</span>
<span class="t" style="font-size:8.4px;line-height:10px;color:#3a4468;letter-spacing:-0.157px;left:392.5px;top:160.5px;">Počáteční datum TM Matrixu</span>
<svg style="left:375px;top:154.5px;" width="17" height="11" viewBox="0 0 34 22"><path d="M3 21L17 5l14 16z" fill="#4a4a4a"/><path d="M1.500 21.200h31" stroke="#111" stroke-width="1.600"/><path d="M6 15L17 2l11 13" fill="none" stroke="#2fd03a" stroke-width="4.500" stroke-linejoin="miter"/><path d="M6 15L17 2l11 13" fill="none" stroke="#0c6a14" stroke-width="1" transform="translate(0,-2.600)" opacity=".6"/></svg>
<div style="left:77px;top:173px;width:56.69999999999999px;height:30.5px;background:#62c2dc;border-right:1.800px solid #1e2850;border-bottom:1.400px solid #141c38;box-sizing:border-box"></div>
<div style="left:133.7px;top:173px;width:57.10000000000002px;height:30.5px;background:#5c7cd4;border-right:1.800px solid #1e2850;border-bottom:1.400px solid #141c38;box-sizing:border-box"></div>
<div style="left:190.8px;top:173px;width:57.099999999999994px;height:30.5px;background:#5c7cd4;border-right:1.800px solid #1e2850;border-bottom:1.400px solid #141c38;box-sizing:border-box"></div>
<div style="left:247.9px;top:173px;width:57.099999999999994px;height:30.5px;background:#5c7cd4;border-right:1.800px solid #1e2850;border-bottom:1.400px solid #141c38;box-sizing:border-box"></div>
<div style="left:305px;top:173px;width:57.10000000000002px;height:30.5px;background:#5c7cd4;border-right:1.800px solid #1e2850;border-bottom:1.400px solid #141c38;box-sizing:border-box"></div>
<div style="left:362.1px;top:173px;width:57.099999999999966px;height:30.5px;background:#5c7cd4;border-right:1.800px solid #1e2850;border-bottom:1.400px solid #141c38;box-sizing:border-box"></div>
<div style="left:419.2px;top:173px;width:57.10000000000002px;height:30.5px;background:#5c7cd4;border-right:1.800px solid #1e2850;border-bottom:1.400px solid #141c38;box-sizing:border-box"></div>
<div style="left:476.3px;top:173px;width:57.099999999999966px;height:30.5px;background:#5c7cd4;border-right:1.800px solid #1e2850;border-bottom:1.400px solid #141c38;box-sizing:border-box"></div>
<div style="left:533.4px;top:173px;width:57.10000000000002px;height:30.5px;background:#5c7cd4;border-right:1.800px solid #1e2850;border-bottom:1.400px solid #141c38;box-sizing:border-box"></div>
<div style="left:590.5px;top:173px;width:57.299999999999955px;height:30.5px;background:#5c7cd4;border-right:1.800px solid #1e2850;border-bottom:1.400px solid #141c38;box-sizing:border-box"></div>
<span class="t" style="font-size:10.3px;line-height:11px;color:#fff;font-weight:bold;-webkit-text-stroke:.22px;left:-45.150000000000006px;width:300px;text-align:center;top:175.7px;letter-spacing:.25px;">28.5.2008</span>
<span class="t" style="font-size:10.3px;line-height:11px;color:#fff;font-weight:bold;-webkit-text-stroke:.22px;left:11.75px;width:300px;text-align:center;top:175.7px;letter-spacing:.25px;">11.6.2008</span>
<span class="t" style="font-size:10.3px;line-height:11px;color:#fff;font-weight:bold;-webkit-text-stroke:.22px;left:68.85000000000002px;width:300px;text-align:center;top:175.7px;letter-spacing:.25px;">12.6.2008</span>
<span class="t" style="font-size:10.3px;line-height:11px;color:#fff;font-weight:bold;-webkit-text-stroke:.22px;left:125.94999999999999px;width:300px;text-align:center;top:175.7px;letter-spacing:.25px;">10.7.2008</span>
<span class="t" style="font-size:10.3px;line-height:11px;color:#fff;font-weight:bold;-webkit-text-stroke:.22px;left:183.05px;width:300px;text-align:center;top:175.7px;letter-spacing:.25px;">13.9.2008</span>
<span class="t" style="font-size:10.3px;line-height:11px;color:#fff;font-weight:bold;-webkit-text-stroke:.22px;left:240.14999999999998px;width:300px;text-align:center;top:175.7px;letter-spacing:.25px;">17.11.2008</span>
<span class="t" style="font-size:10.3px;line-height:11px;color:#fff;font-weight:bold;-webkit-text-stroke:.22px;left:297.25px;width:300px;text-align:center;top:175.7px;letter-spacing:.25px;">20.1.2009</span>
<span class="t" style="font-size:10.3px;line-height:11px;color:#fff;font-weight:bold;-webkit-text-stroke:.22px;left:354.35px;width:300px;text-align:center;top:175.7px;letter-spacing:.25px;">30.1.2009</span>
<span class="t" style="font-size:10.3px;line-height:11px;color:#fff;font-weight:bold;-webkit-text-stroke:.22px;left:411.45000000000005px;width:300px;text-align:center;top:175.7px;letter-spacing:.25px;">31.3.2009</span>
<span class="t" style="font-size:10.3px;line-height:11px;color:#fff;font-weight:bold;-webkit-text-stroke:.22px;left:468.65px;width:300px;text-align:center;top:175.7px;letter-spacing:.25px;">1.6.2009</span>
<span class="t" style="font-size:10.3px;line-height:11px;color:#fff;font-weight:bold;-webkit-text-stroke:.22px;letter-spacing:0.010px;left:91.7px;top:190px;">St (4)</span>
<span class="t" style="font-size:10.3px;line-height:11px;color:#fff;font-weight:bold;-webkit-text-stroke:.22px;letter-spacing:0.350px;left:148.3px;top:190px;">St (2)</span>
<span class="t" style="font-size:10.3px;line-height:11px;color:#fff;font-weight:bold;-webkit-text-stroke:.22px;left:69.65000000000003px;width:300px;text-align:center;top:190px;letter-spacing:.25px;">Čt</span>
<span class="t" style="font-size:10.3px;line-height:11px;color:#fff;font-weight:bold;-webkit-text-stroke:.22px;left:126.75px;width:300px;text-align:center;top:190px;letter-spacing:.25px;">Čt</span>
<span class="t" style="font-size:10.3px;line-height:11px;color:#fff;font-weight:bold;-webkit-text-stroke:.22px;left:183.85000000000002px;width:300px;text-align:center;top:190px;letter-spacing:.25px;">So</span>
<span class="t" style="font-size:10.3px;line-height:11px;color:#fff;font-weight:bold;-webkit-text-stroke:.22px;left:240.95px;width:300px;text-align:center;top:190px;letter-spacing:.25px;">Po (2)</span>
<span class="t" style="font-size:10.3px;line-height:11px;color:#fff;font-weight:bold;-webkit-text-stroke:.22px;left:298.05px;width:300px;text-align:center;top:190px;letter-spacing:.25px;">Út</span>
<span class="t" style="font-size:10.3px;line-height:11px;color:#fff;font-weight:bold;-webkit-text-stroke:.22px;left:355.15000000000003px;width:300px;text-align:center;top:190px;letter-spacing:.25px;">Pá</span>
<span class="t" style="font-size:10.3px;line-height:11px;color:#fff;font-weight:bold;-webkit-text-stroke:.22px;left:412.25px;width:300px;text-align:center;top:190px;letter-spacing:.25px;">Út</span>
<span class="t" style="font-size:10.3px;line-height:11px;color:#fff;font-weight:bold;-webkit-text-stroke:.22px;left:469.44999999999993px;width:300px;text-align:center;top:190px;letter-spacing:.25px;">Po</span>
<div style="left:117.9px;top:189.4px;width:30.8px;height:13.7px;background:#fffbe4;border:1.600px solid #1a1ae8;box-sizing:border-box"></div>
<span class="t" style="font-size:10.3px;line-height:11px;color:#14145c;font-weight:bold;-webkit-text-stroke:.22px;left:-15.899999999999977px;width:300px;text-align:center;top:190.7px;-webkit-text-stroke:.25px #14145c;">13</span>
<svg style="left:120.9px;top:193px;" width="5.8" height="7" viewBox="0 0 5.8 7"><path d="M0.5 3.500H5.8M2.7 1.400L0.5 3.500 2.7 5.600" fill="none" stroke="#14145c" stroke-width="1.150"/></svg>
<svg style="left:141.3px;top:193px;" width="5.8" height="7" viewBox="0 0 5.8 7"><path d="M5.3 3.500H0M3.0999999999999996 1.400L5.3 3.500 3.0999999999999996 5.600" fill="none" stroke="#14145c" stroke-width="1.150"/></svg>
<div style="left:232.0px;top:189.4px;width:30.8px;height:13.7px;background:#fffbe4;border:1.600px solid #1a1ae8;box-sizing:border-box"></div>
<span class="t" style="font-size:10.3px;line-height:11px;color:#14145c;font-weight:bold;-webkit-text-stroke:.22px;left:98.20000000000002px;width:300px;text-align:center;top:190.7px;-webkit-text-stroke:.25px #14145c;">27</span>
<svg style="left:235.0px;top:193px;" width="5.8" height="7" viewBox="0 0 5.8 7"><path d="M0.5 3.500H5.8M2.7 1.400L0.5 3.500 2.7 5.600" fill="none" stroke="#14145c" stroke-width="1.150"/></svg>
<svg style="left:255.39999999999998px;top:193px;" width="5.8" height="7" viewBox="0 0 5.8 7"><path d="M5.3 3.500H0M3.0999999999999996 1.400L5.3 3.500 3.0999999999999996 5.600" fill="none" stroke="#14145c" stroke-width="1.150"/></svg>
<div style="left:289.20000000000005px;top:189.4px;width:30.8px;height:13.7px;background:#fffbe4;border:1.600px solid #1a1ae8;box-sizing:border-box"></div>
<span class="t" style="font-size:10.3px;line-height:11px;color:#14145c;font-weight:bold;-webkit-text-stroke:.22px;left:155.40000000000003px;width:300px;text-align:center;top:190.7px;-webkit-text-stroke:.25px #14145c;">64</span>
<svg style="left:292.20000000000005px;top:193px;" width="5.8" height="7" viewBox="0 0 5.8 7"><path d="M0.5 3.500H5.8M2.7 1.400L0.5 3.500 2.7 5.600" fill="none" stroke="#14145c" stroke-width="1.150"/></svg>
<svg style="left:312.6px;top:193px;" width="5.8" height="7" viewBox="0 0 5.8 7"><path d="M5.3 3.500H0M3.0999999999999996 1.400L5.3 3.500 3.0999999999999996 5.600" fill="none" stroke="#14145c" stroke-width="1.150"/></svg>
<div style="left:346.1px;top:189.4px;width:30.8px;height:13.7px;background:#fffbe4;border:1.600px solid #1a1ae8;box-sizing:border-box"></div>
<span class="t" style="font-size:10.3px;line-height:11px;color:#14145c;font-weight:bold;-webkit-text-stroke:.22px;left:212.3px;width:300px;text-align:center;top:190.7px;-webkit-text-stroke:.25px #14145c;">64</span>
<svg style="left:349.1px;top:193px;" width="5.8" height="7" viewBox="0 0 5.8 7"><path d="M0.5 3.500H5.8M2.7 1.400L0.5 3.500 2.7 5.600" fill="none" stroke="#14145c" stroke-width="1.150"/></svg>
<svg style="left:369.5px;top:193px;" width="5.8" height="7" viewBox="0 0 5.8 7"><path d="M5.3 3.500H0M3.0999999999999996 1.400L5.3 3.500 3.0999999999999996 5.600" fill="none" stroke="#14145c" stroke-width="1.150"/></svg>
<div style="left:403.6px;top:189.4px;width:30.8px;height:13.7px;background:#fffbe4;border:1.600px solid #1a1ae8;box-sizing:border-box"></div>
<span class="t" style="font-size:10.3px;line-height:11px;color:#14145c;font-weight:bold;-webkit-text-stroke:.22px;left:269.8px;width:300px;text-align:center;top:190.7px;-webkit-text-stroke:.25px #14145c;">63</span>
<svg style="left:406.6px;top:193px;" width="5.8" height="7" viewBox="0 0 5.8 7"><path d="M0.5 3.500H5.8M2.7 1.400L0.5 3.500 2.7 5.600" fill="none" stroke="#14145c" stroke-width="1.150"/></svg>
<svg style="left:427.0px;top:193px;" width="5.8" height="7" viewBox="0 0 5.8 7"><path d="M5.3 3.500H0M3.0999999999999996 1.400L5.3 3.500 3.0999999999999996 5.600" fill="none" stroke="#14145c" stroke-width="1.150"/></svg>
<div style="left:464.4px;top:189.4px;width:23.6px;height:13.7px;background:#fffbe4;border:1.600px solid #1a1ae8;box-sizing:border-box"></div>
<span class="t" style="font-size:10.3px;line-height:11px;color:#14145c;font-weight:bold;-webkit-text-stroke:.22px;left:327.0px;width:300px;text-align:center;top:190.7px;-webkit-text-stroke:.25px #14145c;">9</span>
<svg style="left:467.4px;top:193px;" width="5.8" height="7" viewBox="0 0 5.8 7"><path d="M0.5 3.500H5.8M2.7 1.400L0.5 3.500 2.7 5.600" fill="none" stroke="#14145c" stroke-width="1.150"/></svg>
<svg style="left:480.59999999999997px;top:193px;" width="5.8" height="7" viewBox="0 0 5.8 7"><path d="M5.3 3.500H0M3.0999999999999996 1.400L5.3 3.500 3.0999999999999996 5.600" fill="none" stroke="#14145c" stroke-width="1.150"/></svg>
<div style="left:517.4px;top:189.4px;width:30.8px;height:13.7px;background:#fffbe4;border:1.600px solid #1a1ae8;box-sizing:border-box"></div>
<span class="t" style="font-size:10.3px;line-height:11px;color:#14145c;font-weight:bold;-webkit-text-stroke:.22px;left:383.5999999999999px;width:300px;text-align:center;top:190.7px;-webkit-text-stroke:.25px #14145c;">59</span>
<svg style="left:520.4px;top:193px;" width="5.8" height="7" viewBox="0 0 5.8 7"><path d="M0.5 3.500H5.8M2.7 1.400L0.5 3.500 2.7 5.600" fill="none" stroke="#14145c" stroke-width="1.150"/></svg>
<svg style="left:540.8px;top:193px;" width="5.8" height="7" viewBox="0 0 5.8 7"><path d="M5.3 3.500H0M3.0999999999999996 1.400L5.3 3.500 3.0999999999999996 5.600" fill="none" stroke="#14145c" stroke-width="1.150"/></svg>
<div style="left:574.6px;top:189.4px;width:30.8px;height:13.7px;background:#fffbe4;border:1.600px solid #1a1ae8;box-sizing:border-box"></div>
<span class="t" style="font-size:10.3px;line-height:11px;color:#14145c;font-weight:bold;-webkit-text-stroke:.22px;left:440.79999999999995px;width:300px;text-align:center;top:190.7px;-webkit-text-stroke:.25px #14145c;">61</span>
<svg style="left:577.6px;top:193px;" width="5.8" height="7" viewBox="0 0 5.8 7"><path d="M0.5 3.500H5.8M2.7 1.400L0.5 3.500 2.7 5.600" fill="none" stroke="#14145c" stroke-width="1.150"/></svg>
<svg style="left:598.0px;top:193px;" width="5.8" height="7" viewBox="0 0 5.8 7"><path d="M5.3 3.500H0M3.0999999999999996 1.400L5.3 3.500 3.0999999999999996 5.600" fill="none" stroke="#14145c" stroke-width="1.150"/></svg>
<span class="t" style="font-size:10.4px;line-height:11px;color:#000;font-weight:bold;-webkit-text-stroke:.22px;letter-spacing:-0.075px;left:78.5px;top:205.7px;">František Novák</span>
<div style="left:77px;top:217px;width:571px;height:1px;background:#7496e0"></div>
<span class="t" style="font-size:10.4px;line-height:11px;color:#000;font-weight:bold;-webkit-text-stroke:.22px;letter-spacing:-0.180px;left:78.5px;top:333.5px;">Josef Novotný</span>
<div style="left:77px;top:346px;width:571px;height:1px;background:#7496e0"></div>
<span class="t" style="font-size:10.4px;line-height:11px;color:#000;font-weight:bold;-webkit-text-stroke:.22px;letter-spacing:0.080px;left:78.5px;top:386px;">Martina Vaňková</span>
<div style="left:77px;top:398.3px;width:571px;height:1px;background:#7496e0"></div>
<span class="t" style="font-size:10.4px;line-height:11px;color:#000;font-weight:bold;-webkit-text-stroke:.22px;letter-spacing:0.019px;left:78.5px;top:438.8px;">Pavla Medková</span>
<div style="left:77px;top:451px;width:571px;height:1px;background:#7496e0"></div>
<div style="left:79px;top:220.7px;width:53.69999999999999px;height:16.2px;background:#c4d4f4;border-bottom:1px solid #a6b0c4;border-right:1px solid #b0bedc;box-sizing:border-box"></div>
<div style="left:79px;top:236.89999999999998px;width:53.69999999999999px;height:17.7px;background:#fffdc8;border:1px solid #fbf8c4;border-top:none;box-sizing:border-box"></div>
<svg style="left:81.3px;top:223.89999999999998px;" width="11" height="10" viewBox="0 0 22 20"><path d="M1.600 3.800H9.800V1.600L20.600 10 9.800 18.400V16.200H1.600z" fill="#f2fcff" stroke="#22aad6" stroke-width="2.300" stroke-linejoin="miter"/><path d="M5.200 6.900H11.600V5.600L17 10l-5.400 4.400V13.100H5.200z" fill="#2878e8"/></svg>
<span class="t" style="font-size:8.3px;line-height:10px;color:#8c1c5c;letter-spacing:-0.228px;left:94px;top:223.7px;">Frantis</span>
<svg style="left:120.1px;top:221.1px;" width="10.4" height="14.2" viewBox="0 0 20 28"><path d="M10 1C12 3.500 16.500 6 16.500 9.800 16.500 12.200 14.700 13.600 13 14.500L14.600 15.600V17.200H12.600C12.900 19.600 14 21.400 16.400 22.400L18.200 24V27H1.800V24L3.600 22.400C6 21.400 7.100 19.600 7.400 17.200H5.400V15.600L7 14.500C5.300 13.600 3.500 12.200 3.500 9.800 3.500 6 8 3.500 10 1Z" fill="#2ec6b6" stroke="#0a4a48" stroke-width="1.900" stroke-linejoin="round"/><path d="M10 3.500c2 2 4.500 3.800 4.500 6.300 0 2.200-2 3.400-4.500 4z" fill="#0e8a80" opacity=".6"/><path d="M11.500 6.500L8 11" stroke="#d8fff8" stroke-width="1.700" fill="none" stroke-linecap="round"/><path d="M4 24.200h12" stroke="#0a4a48" stroke-width="1.300"/><path d="M8.500 18c-.3 2-1.200 3.500-2.800 4.600" stroke="#aef4e8" stroke-width="1.200" fill="none"/></svg>
<span class="t" style="font-size:10.4px;line-height:11px;color:#000;font-weight:bold;-webkit-text-stroke:.22px;letter-spacing:-0.298px;left:82.2px;top:236.0px;-webkit-text-stroke:.25px #000;">filosofi</span>
<svg style="left:117.6px;top:237.7px;" width="14.5" height="14.5" viewBox="0 0 29 29"><defs><radialGradient id="gg1" cx=".4" cy=".35" r=".75"><stop offset="0" stop-color="#38a4fc"/><stop offset=".6" stop-color="#1884ee"/><stop offset="1" stop-color="#0c5cc4"/></radialGradient></defs><circle cx="14.500" cy="14.500" r="13.300" fill="url(#gg1)"/><path d="M4 9c2.500-4.500 8-7 13.500-6 2 1.500.5 3.500-1.500 4s-.5 3-3 3.500-2 3.500-4.500 4-4-1.500-4.500-5.500z" fill="#5cd838"/><path d="M17.500 15.500c3-1.200 6.500-.5 9 1.500-.5 3.500-2.500 6-5.500 7.500-1.500-.5-1-2.500-2.500-3.500s-2.500-3.500-1-5.500z" fill="#4ccc30"/><circle cx="14.500" cy="14.500" r="13.300" fill="none" stroke="#0c54b4" stroke-width="1.200"/><path d="M5 19a10.500 10.500 0 0 0 9 8" stroke="#6cc0ff" stroke-width="1.800" fill="none" opacity=".6"/></svg>
<div style="left:249.8px;top:220.7px;width:53.69999999999999px;height:16.2px;background:#c4d4f4;border-bottom:1px solid #a6b0c4;border-right:1px solid #b0bedc;box-sizing:border-box"></div>
<div style="left:249.8px;top:236.89999999999998px;width:53.69999999999999px;height:17.7px;background:#fffdc8;border:1px solid #fbf8c4;border-top:none;box-sizing:border-box"></div>
<svg style="left:252.10000000000002px;top:223.89999999999998px;" width="11" height="10" viewBox="0 0 22 20"><path d="M1.600 3.800H9.800V1.600L20.600 10 9.800 18.400V16.200H1.600z" fill="#f2fcff" stroke="#22aad6" stroke-width="2.300" stroke-linejoin="miter"/><path d="M5.200 6.900H11.600V5.600L17 10l-5.400 4.400V13.100H5.200z" fill="#2878e8"/></svg>
<span class="t" style="font-size:8.3px;line-height:10px;color:#8c1c5c;letter-spacing:-0.228px;left:264.8px;top:223.7px;">Frantis</span>
<svg style="left:290.90000000000003px;top:221.1px;" width="10.4" height="14.2" viewBox="0 0 20 28"><path d="M10 1C12 3.500 16.500 6 16.500 9.800 16.500 12.200 14.700 13.600 13 14.500L14.600 15.600V17.200H12.600C12.900 19.600 14 21.400 16.400 22.400L18.200 24V27H1.800V24L3.600 22.400C6 21.400 7.100 19.600 7.400 17.200H5.400V15.600L7 14.500C5.300 13.600 3.500 12.200 3.500 9.800 3.500 6 8 3.500 10 1Z" fill="#2ec6b6" stroke="#0a4a48" stroke-width="1.900" stroke-linejoin="round"/><path d="M10 3.500c2 2 4.500 3.800 4.500 6.300 0 2.200-2 3.400-4.500 4z" fill="#0e8a80" opacity=".6"/><path d="M11.500 6.500L8 11" stroke="#d8fff8" stroke-width="1.700" fill="none" stroke-linecap="round"/><path d="M4 24.200h12" stroke="#0a4a48" stroke-width="1.300"/><path d="M8.500 18c-.3 2-1.200 3.500-2.800 4.600" stroke="#aef4e8" stroke-width="1.200" fill="none"/></svg>
<span class="t" style="font-size:10.4px;line-height:11px;color:#000;font-weight:bold;-webkit-text-stroke:.22px;left:253.0px;top:236.0px;-webkit-text-stroke:.25px #000;">Urychl</span>
<svg style="left:288.40000000000003px;top:237.7px;" width="14.5" height="14.5" viewBox="0 0 29 29"><defs><radialGradient id="gg2" cx=".4" cy=".35" r=".75"><stop offset="0" stop-color="#38a4fc"/><stop offset=".6" stop-color="#1884ee"/><stop offset="1" stop-color="#0c5cc4"/></radialGradient></defs><circle cx="14.500" cy="14.500" r="13.300" fill="url(#gg2)"/><path d="M4 9c2.500-4.500 8-7 13.500-6 2 1.500.5 3.500-1.500 4s-.5 3-3 3.500-2 3.500-4.500 4-4-1.500-4.500-5.500z" fill="#5cd838"/><path d="M17.500 15.500c3-1.200 6.500-.5 9 1.500-.5 3.500-2.500 6-5.500 7.500-1.500-.5-1-2.500-2.500-3.500s-2.500-3.500-1-5.500z" fill="#4ccc30"/><circle cx="14.500" cy="14.500" r="13.300" fill="none" stroke="#0c54b4" stroke-width="1.200"/><path d="M5 19a10.500 10.500 0 0 0 9 8" stroke="#6cc0ff" stroke-width="1.800" fill="none" opacity=".6"/></svg>
<div style="left:306.9px;top:220.7px;width:53.700000000000045px;height:16.2px;background:#c4d4f4;border-bottom:1px solid #a6b0c4;border-right:1px solid #b0bedc;box-sizing:border-box"></div>
<div style="left:306.9px;top:236.89999999999998px;width:53.700000000000045px;height:17.7px;background:#fffdc8;border:1px solid #fbf8c4;border-top:none;box-sizing:border-box"></div>
<svg style="left:309.2px;top:223.89999999999998px;" width="11" height="10" viewBox="0 0 22 20"><path d="M1.600 3.800H9.800V1.600L20.600 10 9.800 18.400V16.200H1.600z" fill="#f2fcff" stroke="#22aad6" stroke-width="2.300" stroke-linejoin="miter"/><path d="M5.200 6.900H11.600V5.600L17 10l-5.400 4.400V13.100H5.200z" fill="#2878e8"/></svg>
<span class="t" style="font-size:8.3px;line-height:10px;color:#8c1c5c;letter-spacing:-0.228px;left:321.9px;top:223.7px;">Frantis</span>
<svg style="left:348.0px;top:221.1px;" width="10.4" height="14.2" viewBox="0 0 20 28"><path d="M10 1C12 3.500 16.500 6 16.500 9.800 16.500 12.200 14.700 13.600 13 14.500L14.600 15.600V17.200H12.600C12.900 19.600 14 21.400 16.400 22.400L18.200 24V27H1.800V24L3.600 22.400C6 21.400 7.100 19.600 7.400 17.200H5.400V15.600L7 14.500C5.300 13.600 3.500 12.200 3.500 9.800 3.500 6 8 3.500 10 1Z" fill="#2ec6b6" stroke="#0a4a48" stroke-width="1.900" stroke-linejoin="round"/><path d="M10 3.500c2 2 4.500 3.800 4.500 6.300 0 2.200-2 3.400-4.500 4z" fill="#0e8a80" opacity=".6"/><path d="M11.500 6.500L8 11" stroke="#d8fff8" stroke-width="1.700" fill="none" stroke-linecap="round"/><path d="M4 24.200h12" stroke="#0a4a48" stroke-width="1.300"/><path d="M8.500 18c-.3 2-1.200 3.500-2.800 4.600" stroke="#aef4e8" stroke-width="1.200" fill="none"/></svg>
<span class="t" style="font-size:10.4px;line-height:11px;color:#000;font-weight:bold;-webkit-text-stroke:.22px;left:310.09999999999997px;top:236.0px;-webkit-text-stroke:.25px #000;">Termo</span>
<svg style="left:345.5px;top:237.7px;" width="14.5" height="14.5" viewBox="0 0 29 29"><defs><radialGradient id="gg3" cx=".4" cy=".35" r=".75"><stop offset="0" stop-color="#38a4fc"/><stop offset=".6" stop-color="#1884ee"/><stop offset="1" stop-color="#0c5cc4"/></radialGradient></defs><circle cx="14.500" cy="14.500" r="13.300" fill="url(#gg3)"/><path d="M4 9c2.500-4.500 8-7 13.500-6 2 1.500.5 3.500-1.500 4s-.5 3-3 3.500-2 3.500-4.500 4-4-1.500-4.500-5.500z" fill="#5cd838"/><path d="M17.500 15.500c3-1.200 6.500-.5 9 1.500-.5 3.500-2.500 6-5.500 7.500-1.500-.5-1-2.500-2.500-3.500s-2.500-3.500-1-5.500z" fill="#4ccc30"/><circle cx="14.500" cy="14.500" r="13.300" fill="none" stroke="#0c54b4" stroke-width="1.200"/><path d="M5 19a10.500 10.500 0 0 0 9 8" stroke="#6cc0ff" stroke-width="1.800" fill="none" opacity=".6"/></svg>
<div style="left:364.0px;top:220.7px;width:53.69999999999999px;height:16.2px;background:#c4d4f4;border-bottom:1px solid #a6b0c4;border-right:1px solid #b0bedc;box-sizing:border-box"></div>
<div style="left:364.0px;top:236.89999999999998px;width:53.69999999999999px;height:17.7px;background:#fff;border:1px solid #f1f0e6;border-top:none;box-sizing:border-box"></div>
<svg style="left:366.3px;top:223.89999999999998px;" width="11" height="10" viewBox="0 0 22 20"><path d="M1.600 3.800H9.800V1.600L20.600 10 9.800 18.400V16.200H1.600z" fill="#f2fcff" stroke="#22aad6" stroke-width="2.300" stroke-linejoin="miter"/><path d="M5.200 6.900H11.600V5.600L17 10l-5.400 4.400V13.100H5.200z" fill="#2878e8"/></svg>
<span class="t" style="font-size:8.3px;line-height:10px;color:#8c1c5c;letter-spacing:-0.228px;left:379.0px;top:223.7px;">Frantis</span>
<svg style="left:404.5px;top:220.79999999999998px;" width="11.4" height="14.4" viewBox="0 0 23 29"><path d="M3.500 1.500h4v2.600h2.300V1.500h3.400v2.600h2.300V1.500h4v7.300l-2.600 2.400c.3 4 1.300 7 3.200 9.600 1.300.6 2 1.400 2 2.600v4.100H.9v-4.100c0-1.200.7-2 2-2.600 1.900-2.600 2.900-5.600 3.200-9.600L3.500 8.800z" fill="#f0848c" stroke="#b42434" stroke-width="1.900" stroke-linejoin="round"/><path d="M11.500 8v19h9.600v-3.300c-3-3-4.600-7.500-4.900-12.700l2.300-2.200V8z" fill="#d05060" opacity=".55"/><path d="M8 11.500c-.3 3.500-1.200 6.500-2.800 9" stroke="#ffd8dc" stroke-width="1.800" fill="none" stroke-linecap="round"/><path d="M2 23.200h19" stroke="#b42434" stroke-width="1.100"/></svg>
<span class="t" style="font-size:10.4px;line-height:11px;color:#000;font-weight:bold;-webkit-text-stroke:.22px;letter-spacing:0.276px;left:367.2px;top:236.0px;-webkit-text-stroke:.25px #000;">vývoj</span>
<div style="left:478.2px;top:220.7px;width:53.69999999999999px;height:16.2px;background:#c4d4f4;border-bottom:1px solid #a6b0c4;border-right:1px solid #b0bedc;box-sizing:border-box"></div>
<div style="left:478.2px;top:236.89999999999998px;width:53.69999999999999px;height:17.7px;background:#fff;border:1px solid #f1f0e6;border-top:none;box-sizing:border-box"></div>
<svg style="left:480.5px;top:223.89999999999998px;" width="11" height="10" viewBox="0 0 22 20"><path d="M1.600 3.800H9.800V1.600L20.600 10 9.800 18.400V16.200H1.600z" fill="#f2fcff" stroke="#22aad6" stroke-width="2.300" stroke-linejoin="miter"/><path d="M5.200 6.900H11.600V5.600L17 10l-5.400 4.400V13.100H5.200z" fill="#2878e8"/></svg>
<span class="t" style="font-size:8.3px;line-height:10px;color:#8c1c5c;letter-spacing:-0.228px;left:493.2px;top:223.7px;">Frantis</span>
<svg style="left:518.7px;top:220.79999999999998px;" width="11.4" height="14.4" viewBox="0 0 23 29"><path d="M3.500 1.500h4v2.600h2.300V1.500h3.400v2.600h2.300V1.500h4v7.300l-2.600 2.400c.3 4 1.300 7 3.200 9.600 1.300.6 2 1.400 2 2.600v4.100H.9v-4.100c0-1.200.7-2 2-2.600 1.900-2.600 2.900-5.600 3.200-9.600L3.500 8.800z" fill="#f0848c" stroke="#b42434" stroke-width="1.900" stroke-linejoin="round"/><path d="M11.500 8v19h9.600v-3.300c-3-3-4.600-7.500-4.900-12.700l2.300-2.200V8z" fill="#d05060" opacity=".55"/><path d="M8 11.500c-.3 3.500-1.200 6.500-2.800 9" stroke="#ffd8dc" stroke-width="1.800" fill="none" stroke-linecap="round"/><path d="M2 23.200h19" stroke="#b42434" stroke-width="1.100"/></svg>
<span class="t" style="font-size:10.4px;line-height:11px;color:#000;font-weight:bold;-webkit-text-stroke:.22px;left:481.4px;top:236.0px;-webkit-text-stroke:.25px #000;">Představ</span>
<div style="left:592.4px;top:220.7px;width:53.89999999999998px;height:16.2px;background:#c4d4f4;border-bottom:1px solid #a6b0c4;border-right:1px solid #b0bedc;box-sizing:border-box"></div>
<div style="left:592.4px;top:236.89999999999998px;width:53.89999999999998px;height:17.7px;background:#fff;border:1px solid #f1f0e6;border-top:none;box-sizing:border-box"></div>
<svg style="left:594.6999999999999px;top:223.89999999999998px;" width="11" height="10" viewBox="0 0 22 20"><path d="M1.600 3.800H9.800V1.600L20.600 10 9.800 18.400V16.200H1.600z" fill="#f2fcff" stroke="#22aad6" stroke-width="2.300" stroke-linejoin="miter"/><path d="M5.200 6.900H11.600V5.600L17 10l-5.400 4.400V13.100H5.200z" fill="#2878e8"/></svg>
<span class="t" style="font-size:8.3px;line-height:10px;color:#8c1c5c;letter-spacing:-0.228px;left:607.4px;top:223.7px;">Frantis</span>
<svg style="left:631.1px;top:221.0px;" width="14.8" height="14.4" viewBox="0 0 30 29"><g fill="#f6c41c" stroke="#b8800c" stroke-width="1.600" stroke-linejoin="round"><circle cx="15" cy="6" r="4.200"/><path d="M9 20c0-5.500 2-9 6-9s6 3.500 6 9z"/><circle cx="7.500" cy="15.500" r="3.800"/><path d="M1 28c0-5.500 2-8.500 6.500-8.500S14 22.500 14 28z"/><circle cx="22.500" cy="15.500" r="3.800"/><path d="M16 28c0-5.500 2-8.500 6.500-8.500S29 22.500 29 28z"/></g><path d="M13 5a2.500 2.500 0 0 1 3-1.500M5.500 14.500a2.500 2.500 0 0 1 3-1.500M20.500 14.500a2.500 2.500 0 0 1 3-1.500" stroke="#fff6c0" stroke-width="1.300" fill="none"/></svg>
<span class="t" style="font-size:10.4px;line-height:11px;color:#000;font-weight:bold;-webkit-text-stroke:.22px;letter-spacing:-0.266px;left:595.6px;top:236.0px;-webkit-text-stroke:.25px #000;">Expanze</span>
<div style="left:79px;top:258.7px;width:53.69999999999999px;height:16.2px;background:#c4d4f4;border-bottom:1px solid #a6b0c4;border-right:1px solid #b0bedc;box-sizing:border-box"></div>
<div style="left:79px;top:274.9px;width:53.69999999999999px;height:17.7px;background:#fff;border:1px solid #f1f0e6;border-top:none;box-sizing:border-box"></div>
<div style="left:80.3px;top:258.7px;width:36.9px;height:15px;overflow:hidden">
<span class="t" style="font-size:8.4px;line-height:10px;color:#8c1c5c;letter-spacing:-0.194px;left:0px;top:3px;">Frantisek N</span>
</div>
<svg style="left:118.2px;top:261.0px;" width="13" height="10.5" viewBox="0 0 26 21"><rect x="1" y="1" width="24" height="19" fill="#b4e05a" stroke="#5a9a14" stroke-width="1.800"/><path d="M1 20L10 10.500M25 20L16 10.500" stroke="#f4ffd8" stroke-width="1.500" fill="none"/><path d="M1.500 1.500L13 12.500 24.500 1.500" fill="#7cc024" stroke="#f4ffd8" stroke-width="1.700" stroke-linejoin="round"/></svg>
<span class="t" style="font-size:6.5px;line-height:7px;color:#111;font-weight:bold;-webkit-text-stroke:.22px;left:107px;top:275.9px;transform:scaleX(0.821);transform-origin:0 0;-webkit-text-stroke:0;">E:1</span>
<div style="left:364.0px;top:258.7px;width:53.69999999999999px;height:16.2px;background:#c4d4f4;border-bottom:1px solid #a6b0c4;border-right:1px solid #b0bedc;box-sizing:border-box"></div>
<div style="left:364.0px;top:274.9px;width:53.69999999999999px;height:17.7px;background:#fffdc8;border:1px solid #fbf8c4;border-top:none;box-sizing:border-box"></div>
<svg style="left:366.3px;top:261.9px;" width="11" height="10" viewBox="0 0 22 20"><path d="M1.600 3.800H9.800V1.600L20.600 10 9.800 18.400V16.200H1.600z" fill="#f2fcff" stroke="#22aad6" stroke-width="2.300" stroke-linejoin="miter"/><path d="M5.200 6.900H11.600V5.600L17 10l-5.400 4.400V13.100H5.200z" fill="#2878e8"/></svg>
<span class="t" style="font-size:8.3px;line-height:10px;color:#8c1c5c;letter-spacing:-0.228px;left:379.0px;top:261.7px;">Frantis</span>
<svg style="left:405.1px;top:259.09999999999997px;" width="10.4" height="14.2" viewBox="0 0 20 28"><path d="M10 1C12 3.500 16.500 6 16.500 9.800 16.500 12.200 14.700 13.600 13 14.500L14.600 15.600V17.200H12.600C12.900 19.600 14 21.400 16.400 22.400L18.200 24V27H1.800V24L3.600 22.400C6 21.400 7.100 19.600 7.400 17.200H5.400V15.600L7 14.500C5.300 13.600 3.500 12.200 3.500 9.800 3.500 6 8 3.500 10 1Z" fill="#2ec6b6" stroke="#0a4a48" stroke-width="1.900" stroke-linejoin="round"/><path d="M10 3.500c2 2 4.500 3.800 4.500 6.300 0 2.200-2 3.400-4.500 4z" fill="#0e8a80" opacity=".6"/><path d="M11.500 6.500L8 11" stroke="#d8fff8" stroke-width="1.700" fill="none" stroke-linecap="round"/><path d="M4 24.200h12" stroke="#0a4a48" stroke-width="1.300"/><path d="M8.500 18c-.3 2-1.200 3.500-2.800 4.600" stroke="#aef4e8" stroke-width="1.200" fill="none"/></svg>
<span class="t" style="font-size:10.4px;line-height:11px;color:#000;font-weight:bold;-webkit-text-stroke:.22px;left:367.2px;top:274.0px;-webkit-text-stroke:.25px #000;">Ohřát</span>
<svg style="left:402.6px;top:275.7px;" width="14.5" height="14.5" viewBox="0 0 29 29"><defs><radialGradient id="gg4" cx=".4" cy=".35" r=".75"><stop offset="0" stop-color="#38a4fc"/><stop offset=".6" stop-color="#1884ee"/><stop offset="1" stop-color="#0c5cc4"/></radialGradient></defs><circle cx="14.500" cy="14.500" r="13.300" fill="url(#gg4)"/><path d="M4 9c2.500-4.500 8-7 13.500-6 2 1.500.5 3.500-1.500 4s-.5 3-3 3.500-2 3.500-4.500 4-4-1.500-4.500-5.500z" fill="#5cd838"/><path d="M17.500 15.500c3-1.200 6.500-.5 9 1.500-.5 3.500-2.500 6-5.500 7.500-1.500-.5-1-2.500-2.500-3.500s-2.500-3.500-1-5.500z" fill="#4ccc30"/><circle cx="14.500" cy="14.500" r="13.300" fill="none" stroke="#0c54b4" stroke-width="1.200"/><path d="M5 19a10.500 10.500 0 0 0 9 8" stroke="#6cc0ff" stroke-width="1.800" fill="none" opacity=".6"/></svg>
<div style="left:79px;top:296.5px;width:53.69999999999999px;height:16.2px;background:#c4d4f4;border-bottom:1px solid #a6b0c4;border-right:1px solid #b0bedc;box-sizing:border-box"></div>
<div style="left:79px;top:312.7px;width:53.69999999999999px;height:17.7px;background:#fff;border:1px solid #f1f0e6;border-top:none;box-sizing:border-box"></div>
<div style="left:80.3px;top:296.5px;width:36.9px;height:15px;overflow:hidden">
<span class="t" style="font-size:8.4px;line-height:10px;color:#8c1c5c;letter-spacing:-0.194px;left:0px;top:3px;">Frantisek N</span>
</div>
<svg style="left:118.2px;top:298.8px;" width="13" height="10.5" viewBox="0 0 26 21"><rect x="1" y="1" width="24" height="19" fill="#f4fcff" stroke="#5ab4c8" stroke-width="1.800"/><path d="M1 20L10 10.500M25 20L16 10.500" stroke="#5ab4c8" stroke-width="1.500" fill="none"/><path d="M1.500 1.500L13 12.500 24.500 1.500" fill="#d4eef8" stroke="#5ab4c8" stroke-width="1.700" stroke-linejoin="round"/></svg>
<span class="t" style="font-size:6.5px;line-height:7px;color:#111;font-weight:bold;-webkit-text-stroke:.22px;left:81.3px;top:313.7px;transform:scaleX(1.174);transform-origin:0 0;-webkit-text-stroke:0;">M:2/2</span>
<div style="left:80.8px;top:327.5px;width:23.4px;height:1px;background:#6c6cf0"></div>
<div style="left:77px;top:347px;width:56.3px;height:36.7px;border:1px dotted #333;box-sizing:border-box"></div>
<div style="left:135.6px;top:349.2px;width:53.70000000000002px;height:16.2px;background:#c4d4f4;border-bottom:1px solid #a6b0c4;border-right:1px solid #b0bedc;box-sizing:border-box"></div>
<div style="left:135.6px;top:365.4px;width:53.70000000000002px;height:17.7px;background:#fff;border:1px solid #f1f0e6;border-top:none;box-sizing:border-box"></div>
<svg style="left:137.9px;top:352.4px;" width="11" height="10" viewBox="0 0 22 20"><path d="M1.600 3.800H9.800V1.600L20.600 10 9.800 18.400V16.200H1.600z" fill="#f2fcff" stroke="#22aad6" stroke-width="2.300" stroke-linejoin="miter"/><path d="M5.200 6.900H11.600V5.600L17 10l-5.400 4.400V13.100H5.200z" fill="#2878e8"/></svg>
<span class="t" style="font-size:8.3px;line-height:10px;color:#8c1c5c;letter-spacing:-0.291px;left:150.6px;top:352.2px;">Pavla</span>
<svg style="left:176.7px;top:349.59999999999997px;" width="10.4" height="14.2" viewBox="0 0 20 28"><path d="M10 1C12 3.500 16.500 6 16.500 9.800 16.500 12.200 14.700 13.600 13 14.500L14.600 15.600V17.200H12.600C12.900 19.600 14 21.400 16.400 22.400L18.200 24V27H1.800V24L3.600 22.400C6 21.400 7.100 19.600 7.400 17.200H5.400V15.600L7 14.500C5.300 13.600 3.500 12.200 3.500 9.800 3.500 6 8 3.500 10 1Z" fill="#2ec6b6" stroke="#0a4a48" stroke-width="1.900" stroke-linejoin="round"/><path d="M10 3.500c2 2 4.500 3.800 4.500 6.300 0 2.200-2 3.400-4.500 4z" fill="#0e8a80" opacity=".6"/><path d="M11.500 6.500L8 11" stroke="#d8fff8" stroke-width="1.700" fill="none" stroke-linecap="round"/><path d="M4 24.200h12" stroke="#0a4a48" stroke-width="1.300"/><path d="M8.500 18c-.3 2-1.200 3.500-2.800 4.600" stroke="#aef4e8" stroke-width="1.200" fill="none"/></svg>
<span class="t" style="font-size:10.4px;line-height:11px;color:#000;font-weight:bold;-webkit-text-stroke:.22px;letter-spacing:-0.013px;left:138.79999999999998px;top:364.5px;-webkit-text-stroke:.25px #000;">Přerovná</span>
<div style="left:135.6px;top:401.7px;width:53.70000000000002px;height:16.2px;background:#c4d4f4;border-bottom:1px solid #a6b0c4;border-right:1px solid #b0bedc;box-sizing:border-box"></div>
<div style="left:135.6px;top:417.9px;width:53.70000000000002px;height:17.7px;background:#fff;border:1px solid #f1f0e6;border-top:none;box-sizing:border-box"></div>
<svg style="left:137.9px;top:404.9px;" width="11" height="10" viewBox="0 0 22 20"><path d="M1.600 3.800H9.800V1.600L20.600 10 9.800 18.400V16.200H1.600z" fill="#f2fcff" stroke="#22aad6" stroke-width="2.300" stroke-linejoin="miter"/><path d="M5.200 6.900H11.600V5.600L17 10l-5.400 4.400V13.100H5.200z" fill="#2878e8"/></svg>
<span class="t" style="font-size:8.3px;line-height:10px;color:#8c1c5c;letter-spacing:-0.291px;left:150.6px;top:404.7px;">Pavla</span>
<svg style="left:176.7px;top:402.09999999999997px;" width="10.4" height="14.2" viewBox="0 0 20 28"><path d="M10 1C12 3.500 16.500 6 16.500 9.800 16.500 12.200 14.700 13.600 13 14.500L14.600 15.600V17.200H12.600C12.900 19.600 14 21.400 16.400 22.400L18.200 24V27H1.800V24L3.600 22.400C6 21.400 7.100 19.600 7.400 17.200H5.400V15.600L7 14.500C5.300 13.600 3.500 12.200 3.500 9.800 3.500 6 8 3.500 10 1Z" fill="#2ec6b6" stroke="#0a4a48" stroke-width="1.900" stroke-linejoin="round"/><path d="M10 3.500c2 2 4.500 3.800 4.500 6.300 0 2.200-2 3.400-4.500 4z" fill="#0e8a80" opacity=".6"/><path d="M11.500 6.500L8 11" stroke="#d8fff8" stroke-width="1.700" fill="none" stroke-linecap="round"/><path d="M4 24.200h12" stroke="#0a4a48" stroke-width="1.300"/><path d="M8.500 18c-.3 2-1.200 3.500-2.800 4.600" stroke="#aef4e8" stroke-width="1.200" fill="none"/></svg>
<span class="t" style="font-size:10.4px;line-height:11px;color:#000;font-weight:bold;-webkit-text-stroke:.22px;letter-spacing:-0.012px;left:138.79999999999998px;top:417.0px;-webkit-text-stroke:.25px #000;">Zaevidov</span>
<div style="left:79px;top:454.5px;width:53.69999999999999px;height:16.2px;background:#c4d4f4;border-bottom:1px solid #a6b0c4;border-right:1px solid #b0bedc;box-sizing:border-box"></div>
<div style="left:79px;top:470.7px;width:53.69999999999999px;height:17.7px;background:#fff;border:1px solid #f1f0e6;border-top:none;box-sizing:border-box"></div>
<div style="left:80.3px;top:454.5px;width:36.9px;height:15px;overflow:hidden">
<span class="t" style="font-size:8.4px;line-height:10px;color:#8c1c5c;letter-spacing:-0.210px;left:0px;top:3px;">Pavla Medk</span>
</div>
<svg style="left:118.2px;top:456.8px;" width="13" height="10.5" viewBox="0 0 26 21"><rect x="1" y="1" width="24" height="19" fill="#f4fcff" stroke="#5ab4c8" stroke-width="1.800"/><path d="M1 20L10 10.500M25 20L16 10.500" stroke="#5ab4c8" stroke-width="1.500" fill="none"/><path d="M1.500 1.500L13 12.500 24.500 1.500" fill="#d4eef8" stroke="#5ab4c8" stroke-width="1.700" stroke-linejoin="round"/></svg>
<span class="t" style="font-size:6.5px;line-height:7px;color:#111;font-weight:bold;-webkit-text-stroke:.22px;left:81.3px;top:471.7px;transform:scaleX(1.072);transform-origin:0 0;-webkit-text-stroke:0;">M:1</span>
<div style="left:80.8px;top:485.5px;width:23.4px;height:1px;background:#b4b4f8"></div>
<div style="left:192.70000000000002px;top:454.5px;width:53.69999999999999px;height:16.2px;background:#c4d4f4;border-bottom:1px solid #a6b0c4;border-right:1px solid #b0bedc;box-sizing:border-box"></div>
<div style="left:192.70000000000002px;top:470.7px;width:53.69999999999999px;height:17.7px;background:#fff;border:1px solid #f1f0e6;border-top:none;box-sizing:border-box"></div>
<svg style="left:195.00000000000003px;top:457.7px;" width="11" height="10" viewBox="0 0 22 20"><path d="M1.600 3.800H9.800V1.600L20.600 10 9.800 18.400V16.200H1.600z" fill="#f2fcff" stroke="#22aad6" stroke-width="2.300" stroke-linejoin="miter"/><path d="M5.200 6.900H11.600V5.600L17 10l-5.400 4.400V13.100H5.200z" fill="#2878e8"/></svg>
<span class="t" style="font-size:8.3px;line-height:10px;color:#8c1c5c;letter-spacing:-0.228px;left:207.70000000000002px;top:457.5px;">Frantis</span>
<svg style="left:233.20000000000002px;top:454.6px;" width="11.4" height="14.4" viewBox="0 0 23 29"><path d="M3.500 1.500h4v2.600h2.300V1.500h3.400v2.600h2.300V1.500h4v7.300l-2.600 2.400c.3 4 1.300 7 3.200 9.600 1.300.6 2 1.400 2 2.600v4.100H.9v-4.100c0-1.200.7-2 2-2.600 1.900-2.600 2.900-5.600 3.200-9.600L3.500 8.800z" fill="#f0848c" stroke="#b42434" stroke-width="1.900" stroke-linejoin="round"/><path d="M11.500 8v19h9.600v-3.300c-3-3-4.600-7.500-4.900-12.700l2.300-2.200V8z" fill="#d05060" opacity=".55"/><path d="M8 11.500c-.3 3.500-1.200 6.500-2.800 9" stroke="#ffd8dc" stroke-width="1.800" fill="none" stroke-linecap="round"/><path d="M2 23.200h19" stroke="#b42434" stroke-width="1.100"/></svg>
<span class="t" style="font-size:10.4px;line-height:11px;color:#000;font-weight:bold;-webkit-text-stroke:.22px;letter-spacing:-0.059px;left:195.9px;top:469.8px;-webkit-text-stroke:.25px #000;">Reorganiz</span>
<div style="left:421.09999999999997px;top:454.5px;width:53.700000000000045px;height:16.2px;background:#c4d4f4;border-bottom:1px solid #a6b0c4;border-right:1px solid #b0bedc;box-sizing:border-box"></div>
<div style="left:421.09999999999997px;top:470.7px;width:53.700000000000045px;height:17.7px;background:#fff;border:1px solid #f1f0e6;border-top:none;box-sizing:border-box"></div>
<svg style="left:423.4px;top:457.7px;" width="11" height="10" viewBox="0 0 22 20"><path d="M1.600 3.800H9.800V1.600L20.600 10 9.800 18.400V16.200H1.600z" fill="#f2fcff" stroke="#22aad6" stroke-width="2.300" stroke-linejoin="miter"/><path d="M5.200 6.900H11.600V5.600L17 10l-5.400 4.400V13.100H5.200z" fill="#2878e8"/></svg>
<span class="t" style="font-size:8.3px;line-height:10px;color:#8c1c5c;letter-spacing:-0.228px;left:436.09999999999997px;top:457.5px;">Frantis</span>
<svg style="left:462.2px;top:454.9px;" width="10.4" height="14.2" viewBox="0 0 20 28"><path d="M10 1C12 3.500 16.500 6 16.500 9.800 16.500 12.200 14.700 13.600 13 14.500L14.600 15.600V17.200H12.600C12.900 19.600 14 21.400 16.400 22.400L18.200 24V27H1.800V24L3.600 22.400C6 21.400 7.100 19.600 7.400 17.200H5.400V15.600L7 14.500C5.300 13.600 3.500 12.200 3.500 9.800 3.500 6 8 3.500 10 1Z" fill="#2ec6b6" stroke="#0a4a48" stroke-width="1.900" stroke-linejoin="round"/><path d="M10 3.500c2 2 4.500 3.800 4.500 6.300 0 2.200-2 3.400-4.500 4z" fill="#0e8a80" opacity=".6"/><path d="M11.500 6.500L8 11" stroke="#d8fff8" stroke-width="1.700" fill="none" stroke-linecap="round"/><path d="M4 24.200h12" stroke="#0a4a48" stroke-width="1.300"/><path d="M8.500 18c-.3 2-1.200 3.500-2.800 4.600" stroke="#aef4e8" stroke-width="1.200" fill="none"/></svg>
<span class="t" style="font-size:10.4px;line-height:11px;color:#000;font-weight:bold;-webkit-text-stroke:.22px;left:424.29999999999995px;top:469.8px;-webkit-text-stroke:.25px #000;">letáková</span>
<div style="left:535.3px;top:454.5px;width:53.700000000000045px;height:16.2px;background:#c4d4f4;border-bottom:1px solid #a6b0c4;border-right:1px solid #b0bedc;box-sizing:border-box"></div>
<div style="left:535.3px;top:470.7px;width:53.700000000000045px;height:17.7px;background:#fffdc8;border:1px solid #fbf8c4;border-top:none;box-sizing:border-box"></div>
<svg style="left:536.5999999999999px;top:459.1px;" width="12.6" height="7" viewBox="0 0 25 14"><rect x="0" y="4" width="2.600" height="6" fill="#fbc070"/><rect x="4" y="4" width="2.600" height="6" fill="#fab050"/><path d="M8 1l6 6-6 6z" fill="#f9a030"/><path d="M13.500 1l6 6-6 6z" fill="#f89020"/><path d="M19 1l6 6-6 6z" fill="#f47c10"/></svg>
<span class="t" style="font-size:8.3px;line-height:10px;color:#8c1c5c;letter-spacing:-0.228px;left:550.3px;top:457.5px;">Frantis</span>
<svg style="left:576.4px;top:454.9px;" width="10.4" height="14.2" viewBox="0 0 20 28"><path d="M10 1C12 3.500 16.500 6 16.500 9.800 16.500 12.200 14.700 13.600 13 14.500L14.600 15.600V17.200H12.600C12.900 19.600 14 21.400 16.400 22.400L18.200 24V27H1.800V24L3.600 22.400C6 21.400 7.100 19.600 7.400 17.200H5.400V15.600L7 14.500C5.300 13.600 3.500 12.200 3.500 9.800 3.500 6 8 3.500 10 1Z" fill="#2ec6b6" stroke="#0a4a48" stroke-width="1.900" stroke-linejoin="round"/><path d="M10 3.500c2 2 4.500 3.800 4.500 6.300 0 2.200-2 3.400-4.500 4z" fill="#0e8a80" opacity=".6"/><path d="M11.500 6.500L8 11" stroke="#d8fff8" stroke-width="1.700" fill="none" stroke-linecap="round"/><path d="M4 24.200h12" stroke="#0a4a48" stroke-width="1.300"/><path d="M8.500 18c-.3 2-1.200 3.500-2.800 4.600" stroke="#aef4e8" stroke-width="1.200" fill="none"/></svg>
<span class="t" style="font-size:10.4px;line-height:11px;color:#000;font-weight:bold;-webkit-text-stroke:.22px;letter-spacing:-0.548px;left:538.5px;top:469.8px;-webkit-text-stroke:.25px #000;">Radio</span>
<svg style="left:573.9px;top:471.5px;" width="14.5" height="14.5" viewBox="0 0 29 29"><defs><radialGradient id="gg5" cx=".4" cy=".35" r=".75"><stop offset="0" stop-color="#38a4fc"/><stop offset=".6" stop-color="#1884ee"/><stop offset="1" stop-color="#0c5cc4"/></radialGradient></defs><circle cx="14.500" cy="14.500" r="13.300" fill="url(#gg5)"/><path d="M4 9c2.500-4.500 8-7 13.500-6 2 1.500.5 3.500-1.500 4s-.5 3-3 3.500-2 3.500-4.500 4-4-1.500-4.500-5.500z" fill="#5cd838"/><path d="M17.500 15.500c3-1.200 6.500-.5 9 1.500-.5 3.500-2.500 6-5.500 7.500-1.500-.5-1-2.500-2.500-3.500s-2.500-3.500-1-5.500z" fill="#4ccc30"/><circle cx="14.500" cy="14.500" r="13.300" fill="none" stroke="#0c54b4" stroke-width="1.200"/><path d="M5 19a10.500 10.500 0 0 0 9 8" stroke="#6cc0ff" stroke-width="1.800" fill="none" opacity=".6"/></svg>
<svg style="left:22px;top:79px" width="32" height="28" viewBox="0 0 32 28"><defs><linearGradient id="pg6" x1="0" y1="0" x2="0.350" y2="1"><stop offset="0" stop-color="#f6eec0"/><stop offset=".45" stop-color="#f6eec0"/><stop offset="1" stop-color="#d4a040"/></linearGradient></defs><path d="M1.40 10.40q0-3 3-3h3.60q3 0 3 3v15.70q0 .8-.8 .8h-3.00q-.8 0-.8-.8v-8.78h-1.200v8.78q0 .8-.8 .8h-3.00q-.8 0-.8-.8z" fill="url(#pg6)" stroke="#1c1c28" stroke-width="1.100" stroke-linejoin="round"/><path d="M8.80 9.40v15.50" stroke="#d4a040" stroke-width="1.600" opacity=".55"/><circle cx="6.2" cy="4.2" r="3.65" fill="#f2f0ea" stroke="#1c1c28" stroke-width="1.100"/><circle cx="5.35" cy="3.18" r="1.70" fill="#fff"/><defs><linearGradient id="pg7" x1="0" y1="0" x2="0.350" y2="1"><stop offset="0" stop-color="#f8b0cc"/><stop offset=".45" stop-color="#f8b0cc"/><stop offset="1" stop-color="#ee50a0"/></linearGradient></defs><path d="M19.00 10.40q0-3 3-3h3.60q3 0 3 3v15.70q0 .8-.8 .8h-3.00q-.8 0-.8-.8v-8.78h-1.200v8.78q0 .8-.8 .8h-3.00q-.8 0-.8-.8z" fill="url(#pg7)" stroke="#1c1c28" stroke-width="1.100" stroke-linejoin="round"/><path d="M26.40 9.40v15.50" stroke="#ee50a0" stroke-width="1.600" opacity=".55"/><circle cx="23.8" cy="4.2" r="3.65" fill="#f2f0ea" stroke="#1c1c28" stroke-width="1.100"/><circle cx="22.95" cy="3.18" r="1.70" fill="#fff"/><path d="M2.500 10.500l8 3 .3 2.600-8.500-2.800z" fill="#f2e8b4" stroke="#1c1c28" stroke-width=".7"/><path d="M25.500 11.500l-3.500 5.500 1.800 1.300 3.700-5z" fill="#f8a8c4" stroke="#1c1c28" stroke-width=".7"/><path d="M10.500 12.500l6-4.500 4.500 8.500-5 4.500z" fill="#fdfdfd" stroke="#3a3a4a" stroke-width=".8" stroke-linejoin="round"/><path d="M10.500 12.500l7 3.500-1-8" fill="none" stroke="#9a9aa8" stroke-width=".7"/></svg>
<svg style="left:23px;top:127.5px" width="27" height="28" viewBox="0 0 27 28"><rect x="4.500" y="9" width="13" height="13" fill="#fff" stroke="#555" stroke-width=".6"/><rect x="5.0" y="9.5" width="2.400" height="2.400" fill="#3a3a3a"/><rect x="5.0" y="11.9" width="2.400" height="2.400" fill="#fff"/><rect x="5.0" y="14.3" width="2.400" height="2.400" fill="#3a3a3a"/><rect x="5.0" y="16.7" width="2.400" height="2.400" fill="#fff"/><rect x="5.0" y="19.1" width="2.400" height="2.400" fill="#3a3a3a"/><rect x="7.4" y="9.5" width="2.400" height="2.400" fill="#fff"/><rect x="7.4" y="11.9" width="2.400" height="2.400" fill="#3a3a3a"/><rect x="7.4" y="14.3" width="2.400" height="2.400" fill="#fff"/><rect x="7.4" y="16.7" width="2.400" height="2.400" fill="#3a3a3a"/><rect x="7.4" y="19.1" width="2.400" height="2.400" fill="#fff"/><rect x="9.8" y="9.5" width="2.400" height="2.400" fill="#3a3a3a"/><rect x="9.8" y="11.9" width="2.400" height="2.400" fill="#fff"/><rect x="9.8" y="14.3" width="2.400" height="2.400" fill="#3a3a3a"/><rect x="9.8" y="16.7" width="2.400" height="2.400" fill="#fff"/><rect x="9.8" y="19.1" width="2.400" height="2.400" fill="#3a3a3a"/><rect x="12.2" y="9.5" width="2.400" height="2.400" fill="#fff"/><rect x="12.2" y="11.9" width="2.400" height="2.400" fill="#3a3a3a"/><rect x="12.2" y="14.3" width="2.400" height="2.400" fill="#fff"/><rect x="12.2" y="16.7" width="2.400" height="2.400" fill="#3a3a3a"/><rect x="12.2" y="19.1" width="2.400" height="2.400" fill="#fff"/><rect x="14.6" y="9.5" width="2.400" height="2.400" fill="#3a3a3a"/><rect x="14.6" y="11.9" width="2.400" height="2.400" fill="#fff"/><rect x="14.6" y="14.3" width="2.400" height="2.400" fill="#3a3a3a"/><rect x="14.6" y="16.7" width="2.400" height="2.400" fill="#fff"/><rect x="14.6" y="19.1" width="2.400" height="2.400" fill="#3a3a3a"/><path d="M2.500 9.500c0-3 2-4.500 5-4.500 3 0 5 1 8 4.500l-2 1.800c-2-2-3.500-2.800-5.500-2.800v2.500h-5.500z" fill="#22c022" stroke="#1a4a1a" stroke-width=".8" stroke-linejoin="round"/><circle cx="8.5" cy="3.8" r="3.45" fill="#f2f0ea" stroke="#1c1c28" stroke-width="1.100"/><circle cx="7.70" cy="2.84" r="1.60" fill="#fff"/><path d="M9 19c2 2.500 5 3.500 8 3 2.500-2 6-1.500 7.500 1 .5 2.500-2 4-6 4-5 0-9-2-11.500-5.500z" fill="#f89010" stroke="#7a3c08" stroke-width=".8" stroke-linejoin="round"/><circle cx="19.5" cy="18.8" r="3.45" fill="#f2f0ea" stroke="#1c1c28" stroke-width="1.100"/><circle cx="18.70" cy="17.84" r="1.60" fill="#fff"/></svg>
<svg style="left:22px;top:175.5px" width="31" height="30" viewBox="0 0 31 30"><g transform="scale(1.000)"><defs><linearGradient id="pzg8" x1="0" y1="0" x2="0" y2="1"><stop offset="0" stop-color="#fbfbf8"/><stop offset=".5" stop-color="#eeeeea"/><stop offset="1" stop-color="#a8a498"/></linearGradient></defs><path d="M1.300 9.800q0-3 3-3h3.200q3 0 3 3v14.400q0 1-1 1h-7.200q-1 0-1-1z" fill="url(#pzg8)" stroke="#1c1c28" stroke-width="1.100" stroke-linejoin="round"/><path d="M8.600 8v17" stroke="#8a867a" stroke-width="1.500" opacity=".6"/><circle cx="6.1" cy="3.3" r="3.65" fill="#f2f0ea" stroke="#1c1c28" stroke-width="1.100"/><circle cx="5.25" cy="2.28" r="1.70" fill="#fff"/><path d="M6.900 9.300h2.300c-.4-1.300.2-2.100 1.200-2.100s1.600.8 1.200 2.100h2.300v2.800c1.200-.4 2 .2 2 1.100s-.8 1.500-2 1.100v3.300h-2.400c.4-1.200-.2-1.900-1.100-1.900s-1.500.7-1.100 1.900h-2.400z" fill="#ece41c" stroke="#2a2a10" stroke-width=".9" stroke-linejoin="round"/><path d="M2.500 12l4.500 4.500" stroke="#1c1c28" stroke-width="2.400" stroke-linecap="round"/><path d="M2.500 12l4.500 4.500" stroke="#f4f4f0" stroke-width="1.300" stroke-linecap="round"/><path d="M18.800 11.900h3c-.5-1.400.3-2.300 1.400-2.300s1.900.9 1.400 2.300h4v16.300h-16v-8.400h2.500c.3 1.300 1 1.800 1.900 1.800s1.500-.6 1.800-1.800z" fill="#f0e010" stroke="#1e1e0c" stroke-width="1" stroke-linejoin="round"/><path d="M20.500 28v-3c-1.300.4-2.200-.3-2.200-1.300s.9-1.700 2.200-1.300v-2.600M20.500 19.800h2.800c-.4-1.300.3-2.100 1.300-2.100s1.700.8 1.300 2.100h2.600" fill="none" stroke="#1e1e0c" stroke-width=".9"/><path d="M21 21h7v6.500h-7z" fill="#c8b400" opacity=".35"/></g></svg>
<svg style="left:27px;top:226px" width="26" height="28" viewBox="0 0 26 28"><path d="M11.500 9q0-2.500 2.500-2.500h6q2.500 0 2.500 2.500v9h-1.500v8h-3.200v-7h-.6v7h-3.200v-8h-2.500z" fill="#78c828" stroke="#2a3a10" stroke-width=".9" stroke-linejoin="round"/><path d="M17.500 7h2.500q2 0 2 2.500v8.500h-1.500v8h-3z" fill="#3c8a10" opacity=".6"/><circle cx="16.8" cy="3.8" r="3.35" fill="#f2f0ea" stroke="#1c1c28" stroke-width="1.100"/><circle cx="16.03" cy="2.87" r="1.55" fill="#fff"/><path d="M7.500 13.500L1.500 22" stroke="#2a2a2a" stroke-width="2.600" stroke-linecap="round"/><path d="M7.500 13.500L1.800 21.600" stroke="#e8e8e8" stroke-width="1.300" stroke-linecap="round"/><circle cx="11" cy="8" r="6" fill="#bfeaf4" fill-opacity=".75" stroke="#2a2a2a" stroke-width="1.300"/><circle cx="11" cy="8" r="4.800" fill="none" stroke="#e8fbff" stroke-width=".9"/></svg>
<svg style="left:22.5px;top:271.5px" width="30" height="29" viewBox="0 0 30 29"><path d="M5 13c0-3 2-4.500 5-4.500 3 0 5.500 1.500 5.500 4.500l-.5 6-1.500 1 .5 7h-3.500l-.5-5-1 5h-3.500l1-8z" fill="#f8a818" stroke="#6a3c08" stroke-width=".9" stroke-linejoin="round"/><path d="M11 9c2.500.3 4.500 1.500 4.500 4l-.5 6-1.500 1 .5 7h-2z" fill="#c87008" opacity=".6"/><circle cx="10" cy="4.3" r="3.75" fill="#f2f0ea" stroke="#1c1c28" stroke-width="1.100"/><circle cx="9.12" cy="3.25" r="1.75" fill="#fff"/><path d="M3 13.500l13 6.500" stroke="#2a2a2a" stroke-width="2.400" stroke-linecap="round"/><path d="M3 13.500l13 6.500" stroke="#f4f4f4" stroke-width="1.200" stroke-linecap="round"/><ellipse cx="17.500" cy="20.800" rx="2.800" ry="1.800" fill="#f0f0f0" stroke="#2a2a2a" stroke-width=".8" transform="rotate(25 17.500 20.800)"/><path d="M17 28l5.500-7.500 5.500 7.500z" fill="#8a4a14" stroke="#3a2008" stroke-width=".8" stroke-linejoin="round"/><path d="M20 26l2-3 1.500 3z" fill="#c88030"/></svg>
<svg style="left:23.5px;top:324.5px" width="27" height="21" viewBox="0 0 27 21"><rect x=".8" y=".8" width="25.400" height="19" fill="#fdfdfd" stroke="#1c2c5c" stroke-width="1.400"/><path d="M3.500 17.500v-3q0-3.500 4.200-3.500t4.200 3.500v3z" fill="#38a8e4" stroke="#1c3c6c" stroke-width=".8"/><circle cx="7.700" cy="7" r="3.200" fill="#f0d8c0" stroke="#222" stroke-width=".7"/><path d="M4.300 6.800a3.400 3.400 0 0 1 6.800 0l-1.200-.8h-4.400z" fill="#111"/><path d="M14.500 6h5M14.500 8.200h8.500M14.500 12h8.500M14.500 14.200h8.500M14.500 16.400h8.500" stroke="#444" stroke-width="1.100"/></svg>
<svg style="left:22px;top:368px" width="31" height="29" viewBox="0 0 31 29"><rect x="1" y="2.500" width="20" height="18" fill="#fff" stroke="#6a7a8a" stroke-width=".9"/><rect x="1" y="2.500" width="20" height="4" fill="#48b0a8"/><path d="M3 1v3M5.500 1v3M8 1v3M10.500 1v3M13 1v3M15.500 1v3M18 1v3" stroke="#eee" stroke-width="1"/><path d="M3 17h16M3 19h16" stroke="#c8d8e0" stroke-width=".8"/><path d="M6 10.500l2.500 3 4.500-5" fill="none" stroke="#e01828" stroke-width="2"/><path d="M13 11.500l6.500-2.500q1.500-1 4-1 4 0 4 4v7h-1.500v8.500h-2.800v-7h-.6v7h-2.800v-8.500-6l-5.500 1.500z" fill="#c4bc58" stroke="#3a3810" stroke-width=".9" stroke-linejoin="round"/><path d="M24 8.500q3.500 0 3.500 3.500v7h-1.500v8.500h-2z" fill="#7a7420" opacity=".6"/><circle cx="24" cy="5.2" r="3.55" fill="#f2f0ea" stroke="#1c1c28" stroke-width="1.100"/><circle cx="23.18" cy="4.21" r="1.65" fill="#fff"/></svg>
<svg style="left:23px;top:417px" width="30" height="29" viewBox="0 0 30 29"><defs><linearGradient id="pg9" x1="0" y1="0" x2="0.350" y2="1"><stop offset="0" stop-color="#40e040"/><stop offset=".45" stop-color="#40e040"/><stop offset="1" stop-color="#109010"/></linearGradient></defs><path d="M9.60 10.00q0-3 3-3h3.40q3 0 3 3v15.20q0 .8-.8 .8h-2.90q-.8 0-.8-.8v-8.55h-1.200v8.55q0 .8-.8 .8h-2.90q-.8 0-.8-.8z" fill="url(#pg9)" stroke="#1c1c28" stroke-width="1.100" stroke-linejoin="round"/><path d="M16.80 9.00v15.00" stroke="#109010" stroke-width="1.600" opacity=".55"/><circle cx="14.3" cy="3.8" r="3.65" fill="#f2f0ea" stroke="#1c1c28" stroke-width="1.100"/><circle cx="13.45" cy="2.78" r="1.70" fill="#fff"/><defs><linearGradient id="pg10" x1="0" y1="0" x2="0.350" y2="1"><stop offset="0" stop-color="#58a8ec"/><stop offset=".45" stop-color="#58a8ec"/><stop offset="1" stop-color="#1c58b0"/></linearGradient></defs><path d="M1.10 13.00q0-3 3-3h3.40q3 0 3 3v14.70q0 .8-.8 .8h-2.90q-.8 0-.8-.8v-8.33h-1.200v8.33q0 .8-.8 .8h-2.90q-.8 0-.8-.8z" fill="url(#pg10)" stroke="#1c1c28" stroke-width="1.100" stroke-linejoin="round"/><path d="M8.30 12.00v14.50" stroke="#1c58b0" stroke-width="1.600" opacity=".55"/><circle cx="5.8" cy="6.8" r="3.65" fill="#f2f0ea" stroke="#1c1c28" stroke-width="1.100"/><circle cx="4.95" cy="5.78" r="1.70" fill="#fff"/><defs><linearGradient id="pg11" x1="0" y1="0" x2="0.350" y2="1"><stop offset="0" stop-color="#f88c60"/><stop offset=".45" stop-color="#f88c60"/><stop offset="1" stop-color="#c83818"/></linearGradient></defs><path d="M18.30 13.00q0-3 3-3h3.40q3 0 3 3v14.70q0 .8-.8 .8h-2.90q-.8 0-.8-.8v-8.33h-1.200v8.33q0 .8-.8 .8h-2.90q-.8 0-.8-.8z" fill="url(#pg11)" stroke="#1c1c28" stroke-width="1.100" stroke-linejoin="round"/><path d="M25.50 12.00v14.50" stroke="#c83818" stroke-width="1.600" opacity=".55"/><circle cx="23" cy="6.8" r="3.65" fill="#f2f0ea" stroke="#1c1c28" stroke-width="1.100"/><circle cx="22.15" cy="5.78" r="1.70" fill="#fff"/><path d="M9 14.500l6 3.500M20 14.500l-5 3.500" stroke="#1c1c28" stroke-width="2.800" stroke-linecap="round"/><path d="M9 14.500l6 3.500" stroke="#58a8ec" stroke-width="1.500" stroke-linecap="round"/><path d="M20 14.500l-5 3.500" stroke="#f88c60" stroke-width="1.500" stroke-linecap="round"/></svg>
<svg style="left:21px;top:464.5px" width="31" height="29" viewBox="0 0 31 29"><path d="M12 2l16.500 2.500v19l-16.500 2.500z" fill="#f0dcf8" stroke="#4a3a6a" stroke-width=".9" stroke-linejoin="round"/><path d="M16 2.75v20.5" stroke="#c8a8e8" stroke-width=".6"/><path d="M19 3.0v20.0" stroke="#c8a8e8" stroke-width=".6"/><path d="M22 3.25v19.5" stroke="#c8a8e8" stroke-width=".6"/><path d="M25 3.5v19.0" stroke="#c8a8e8" stroke-width=".6"/><path d="M12 6.0l16 1.0" stroke="#c8a8e8" stroke-width=".6"/><path d="M12 9.4l16 0.75" stroke="#c8a8e8" stroke-width=".6"/><path d="M12 12.8l16 0.5" stroke="#c8a8e8" stroke-width=".6"/><path d="M12 16.2l16 0.25" stroke="#c8a8e8" stroke-width=".6"/><path d="M12 19.6l16 0.0" stroke="#c8a8e8" stroke-width=".6"/><path d="M13 22c6-1 12-7 14-17" fill="none" stroke="#4a2a7a" stroke-width="1"/><path d="M1.500 12q0-3.500 3.500-3.500h2.500l6.500-3.500 1 2-5 4v8h-1.500v8h-2.800v-7h-.6v7h-2.800v-8h-.8z" fill="#e848e8" stroke="#4a104a" stroke-width=".9" stroke-linejoin="round"/><path d="M7 9l1.500-.5v11.500h-1.500z" fill="#901890" opacity=".5"/><circle cx="5.8" cy="4.3" r="3.55" fill="#f2f0ea" stroke="#1c1c28" stroke-width="1.100"/><circle cx="4.97" cy="3.31" r="1.65" fill="#fff"/></svg>
<svg style="left:22px;top:513.5px" width="30" height="29" viewBox="0 0 30 29"><path d="M15 11.500v4M5.500 19v-3.500h19v3.500M15 15.500v3.500" fill="none" stroke="#1a1a1a" stroke-width="1"/><path d="M10.8 11.3v-1.500q0-2.800 4.200-2.800t4.200 2.800v1.500z" fill="#f06020" stroke="#2a2a2a" stroke-width=".8"/><circle cx="15" cy="3.5" r="3.25" fill="#f2f0ea" stroke="#1c1c28" stroke-width="1.100"/><circle cx="14.25" cy="2.60" r="1.50" fill="#fff"/><path d="M1.2999999999999998 28.3v-1.500q0-2.800 4.200-2.800t4.200 2.800v1.500z" fill="#30c8f0" stroke="#2a2a2a" stroke-width=".8"/><circle cx="5.5" cy="20.5" r="3.25" fill="#f2f0ea" stroke="#1c1c28" stroke-width="1.100"/><circle cx="4.75" cy="19.60" r="1.50" fill="#fff"/><path d="M10.8 28.3v-1.500q0-2.800 4.200-2.800t4.200 2.800v1.500z" fill="#30d030" stroke="#2a2a2a" stroke-width=".8"/><circle cx="15" cy="20.5" r="3.25" fill="#f2f0ea" stroke="#1c1c28" stroke-width="1.100"/><circle cx="14.25" cy="19.60" r="1.50" fill="#fff"/><path d="M20.3 28.3v-1.500q0-2.800 4.200-2.800t4.200 2.800v1.500z" fill="#f4d818" stroke="#2a2a2a" stroke-width=".8"/><circle cx="24.5" cy="20.5" r="3.25" fill="#f2f0ea" stroke="#1c1c28" stroke-width="1.100"/><circle cx="23.75" cy="19.60" r="1.50" fill="#fff"/></svg>
<svg style="left:23px;top:561px" width="28" height="30" viewBox="0 0 28 30"><path d="M1.500 4.500h25" stroke="#2a2a2a" stroke-width="1.300"/><path d="M3 1.500v6M5 2.500v4M23 2.500v4M25 1.500v6" stroke="#2a2a2a" stroke-width="1.800"/><path d="M7.500 5l3.500 8.500h6l3.500-8.500" fill="none" stroke="#2a2a2a" stroke-width="3.200" stroke-linecap="round" stroke-linejoin="round"/><path d="M7.500 5l3.500 8.500h6l3.500-8.500" fill="none" stroke="#f4e8c0" stroke-width="1.800" stroke-linecap="round" stroke-linejoin="round"/><path d="M10 12.500h8l-.5 7.500h-7z" fill="#fdfdf4" stroke="#2a2a2a" stroke-width=".9"/><path d="M10.500 19.500h7l3.500 9.500h-3.500l-3.500-6-3.500 6h-3.500z" fill="#5a48d8" stroke="#1c1450" stroke-width=".9" stroke-linejoin="round"/><circle cx="14" cy="9.3" r="3.45" fill="#f2f0ea" stroke="#1c1c28" stroke-width="1.100"/><circle cx="13.20" cy="8.34" r="1.60" fill="#fff"/></svg>
<div style="left:21px;top:594.3px;width:5px;height:1.2px;background:#2a3460;opacity:.75"></div>
<div style="left:28px;top:594.3px;width:3px;height:1.2px;background:#2a3460;opacity:.75"></div>
<div style="left:33px;top:594.3px;width:4px;height:1.2px;background:#2a3460;opacity:.75"></div>
<div style="left:39px;top:594.3px;width:1.5px;height:1.2px;background:#2a3460;opacity:.75"></div>
<div style="left:43px;top:594.3px;width:4px;height:1.2px;background:#2a3460;opacity:.75"></div>
<div style="left:48.5px;top:594.3px;width:1.5px;height:1.2px;background:#2a3460;opacity:.75"></div>
<div style="left:52.5px;top:577.5px;width:14.5px;height:15px;background:#c5d9f7;border:1px solid #eef4fd;box-sizing:border-box"></div>
<svg style="left:55.5px;top:581.5px;" width="9" height="7" viewBox="0 0 18 14"><path d="M2.500 3l6.500 7 6.500-7" fill="none" stroke="#1c2c5c" stroke-width="3.200"/></svg>
<svg style="left:70.3px;top:330px;" width="3.5" height="10" viewBox="0 0 7 20"><path d="M0 0l7 4-7 4zM7 10.500l-7 4.500 7 4.500z" fill="#111"/></svg>
<svg style="left:80px;top:74px" width="30" height="29" viewBox="0 0 31 30"><g transform="scale(1.000)"><defs><linearGradient id="pzg12" x1="0" y1="0" x2="0" y2="1"><stop offset="0" stop-color="#fbfbf8"/><stop offset=".5" stop-color="#eeeeea"/><stop offset="1" stop-color="#a8a498"/></linearGradient></defs><path d="M1.300 9.800q0-3 3-3h3.200q3 0 3 3v14.400q0 1-1 1h-7.200q-1 0-1-1z" fill="url(#pzg12)" stroke="#1c1c28" stroke-width="1.100" stroke-linejoin="round"/><path d="M8.600 8v17" stroke="#8a867a" stroke-width="1.500" opacity=".6"/><circle cx="6.1" cy="3.3" r="3.65" fill="#f2f0ea" stroke="#1c1c28" stroke-width="1.100"/><circle cx="5.25" cy="2.28" r="1.70" fill="#fff"/><path d="M6.900 9.300h2.300c-.4-1.300.2-2.100 1.200-2.100s1.600.8 1.200 2.100h2.300v2.800c1.200-.4 2 .2 2 1.100s-.8 1.500-2 1.100v3.300h-2.400c.4-1.200-.2-1.900-1.100-1.900s-1.500.7-1.100 1.900h-2.400z" fill="#ece41c" stroke="#2a2a10" stroke-width=".9" stroke-linejoin="round"/><path d="M2.500 12l4.500 4.500" stroke="#1c1c28" stroke-width="2.400" stroke-linecap="round"/><path d="M2.500 12l4.500 4.500" stroke="#f4f4f0" stroke-width="1.300" stroke-linecap="round"/><path d="M18.800 11.900h3c-.5-1.400.3-2.300 1.400-2.300s1.900.9 1.400 2.300h4v16.300h-16v-8.400h2.500c.3 1.300 1 1.800 1.900 1.800s1.500-.6 1.800-1.800z" fill="#f0e010" stroke="#1e1e0c" stroke-width="1" stroke-linejoin="round"/><path d="M20.500 28v-3c-1.300.4-2.200-.3-2.200-1.300s.9-1.700 2.200-1.300v-2.600M20.500 19.800h2.800c-.4-1.300.3-2.100 1.300-2.100s1.700.8 1.300 2.100h2.600" fill="none" stroke="#1e1e0c" stroke-width=".9"/><path d="M21 21h7v6.500h-7z" fill="#c8b400" opacity=".35"/></g></svg>
<div style="left:75px;top:577px;width:819px;height:18.5px;background:linear-gradient(#d9e7fc 0%,#c2d8f8 45%,#8db0e8 100%)"></div>
<div style="left:0px;top:595.5px;width:900px;height:7px;background:#bcd4fa"></div>
<div style="left:75px;top:595.5px;width:819px;height:3px;background:linear-gradient(#98b6ec,#bcd4fa)"></div>
<div style="left:0px;top:600.3px;width:900px;height:0.8px;background:#dfeafc"></div>
<div style="left:112.3px;top:576.3px;width:75.7px;height:15.4px;background:#fafcff;border:1px solid #98a4bc;border-top-color:#8c98b0;box-sizing:border-box"></div>
<div style="left:191px;top:576.3px;width:79.5px;height:15.4px;background:#fafcff;border:1px solid #98a4bc;border-top-color:#8c98b0;box-sizing:border-box"></div>
<div style="left:75.8px;top:576px;width:36.5px;height:17px;background:#fff;border-left:1px solid #d8d4c4;box-sizing:border-box"></div>
<div style="left:75.8px;top:592px;width:36.5px;height:2.8px;background:linear-gradient(#fcc040,#f09414)"></div>
<span class="t" style="font-size:9.4px;line-height:11px;color:#222a40;letter-spacing:0.162px;left:80.3px;top:580px;">Matrix</span>
<span class="t" style="font-size:9.4px;line-height:11px;color:#1c2030;letter-spacing:-0.202px;left:116px;top:578.6px;">Pracovní zatížení</span>
<span class="t" style="font-size:9.4px;line-height:11px;color:#1c2030;letter-spacing:-0.092px;left:194.7px;top:578.6px;">Klíčové indikátory</span>
<div style="left:0px;top:601.5px;width:900px;height:1px;background:#8098cc"></div>
<div style="left:0px;top:602.3px;width:900px;height:17px;background:linear-gradient(#d6e5fb,#a0bcec)"></div>
<div style="left:0px;top:602.3px;width:129px;height:16.7px;background:linear-gradient(#dbe8fc 0%,#c4d9f7 50%,#9cb9ea 100%);border:1px solid #e6effd;border-right-color:#86a4d8;border-bottom-color:#86a4d8;box-sizing:border-box"></div>
<div style="left:132.3px;top:602.3px;width:128.7px;height:16.7px;background:linear-gradient(#dbe8fc 0%,#c4d9f7 50%,#9cb9ea 100%);border:1px solid #e6effd;border-right-color:#86a4d8;border-bottom-color:#86a4d8;box-sizing:border-box"></div>
<div style="left:263.5px;top:602.3px;width:85.80000000000001px;height:16.7px;background:linear-gradient(#dbe8fc 0%,#c4d9f7 50%,#9cb9ea 100%);border:1px solid #e6effd;border-right-color:#86a4d8;border-bottom-color:#86a4d8;box-sizing:border-box"></div>
<div style="left:351.7px;top:602.3px;width:102.80000000000001px;height:16.7px;background:linear-gradient(#dbe8fc 0%,#c4d9f7 50%,#9cb9ea 100%);border:1px solid #e6effd;border-right-color:#86a4d8;border-bottom-color:#86a4d8;box-sizing:border-box"></div>
<div style="left:820.5px;top:602.3px;width:78.5px;height:16.7px;background:linear-gradient(#dbe8fc 0%,#c4d9f7 50%,#9cb9ea 100%);border:1px solid #e6effd;border-right-color:#86a4d8;border-bottom-color:#86a4d8;box-sizing:border-box"></div>
<div style="left:0px;top:618.5px;width:900px;height:1px;background:#6684cc"></div>
<div style="left:0px;top:619.3px;width:900px;height:3.7px;background:linear-gradient(#2a7af0,#2468e4)"></div>
<svg style="left:1.8px;top:607.2px;" width="14.5" height="7" viewBox="0 0 29 14"><path d="M1 7.500h8c1.500 0 1.500-5 5.500-5 3.500 0 4.500 3 3 5" fill="none" stroke="#0c9c20" stroke-width="3" stroke-linecap="round"/><path d="M28 7h-8c-1.500 0-1.500 5-5.500 5-3.500 0-4.500-3-3-5" fill="none" stroke="#f01c24" stroke-width="3" stroke-linecap="round"/></svg>
<span class="t" style="font-size:9.4px;line-height:11px;color:#141828;letter-spacing:0.016px;left:21.8px;top:605px;">7 uživatel(ů) online</span>
<span class="t" style="font-size:9.4px;line-height:11px;color:#141828;letter-spacing:-0.084px;left:268.3px;top:605px;">Žádné přenosy</span>
<span class="t" style="font-size:9.4px;line-height:11px;color:#141828;letter-spacing:-0.230px;left:409.3px;top:605px;">15 položek</span>
<div style="left:457.5px;top:603px;width:361px;height:15.5px;background:#fff;border:1px solid #b4c8e8;box-sizing:border-box"></div>
<span class="t" style="font-size:9.4px;line-height:11px;color:#141828;letter-spacing:0.020px;left:460.7px;top:605px;white-space:pre;">28.5.2008 15:22  : Uživatel SyncML testing user 1 se odhlásil</span>
<div style="left:805px;top:604px;width:12.8px;height:13.5px;background:linear-gradient(#d0e0fa,#b4ccf4);border:1px solid #e6effd;box-sizing:border-box"></div>
<svg style="left:807.5px;top:607.5px;" width="8" height="6.5" viewBox="0 0 16 13"><path d="M2 2.500l6 6.500 6-6.500" fill="none" stroke="#1c2c5c" stroke-width="3.200"/></svg>
<div style="left:899px;top:23px;width:1px;height:600px;background:#2c5ed2"></div>
<svg style="left:860.5px;top:73px;" width="34" height="34" viewBox="0 0 34 34"><circle cx="17.00" cy="2.50" r="1.3" fill="#fff" opacity="0.95"/><circle cx="24.25" cy="4.44" r="1.1" fill="#fff" opacity="0.8"/><circle cx="29.56" cy="9.75" r="1.1" fill="#fff" opacity="0.8"/><circle cx="31.50" cy="17.00" r="1.3" fill="#fff" opacity="0.95"/><circle cx="29.56" cy="24.25" r="1.1" fill="#fff" opacity="0.8"/><circle cx="24.25" cy="29.56" r="1.1" fill="#fff" opacity="0.8"/><circle cx="17.00" cy="31.50" r="1.3" fill="#fff" opacity="0.95"/><circle cx="9.75" cy="29.56" r="1.1" fill="#fff" opacity="0.8"/><circle cx="4.44" cy="24.25" r="1.1" fill="#fff" opacity="0.8"/><circle cx="2.50" cy="17.00" r="1.3" fill="#fff" opacity="0.95"/><circle cx="4.44" cy="9.75" r="1.1" fill="#fff" opacity="0.8"/><circle cx="9.75" cy="4.44" r="1.1" fill="#fff" opacity="0.8"/><path d="M17 17l7.500 2.300" stroke="#fff" stroke-width="1.300" stroke-linecap="round"/><path d="M17 17l-6 10" stroke="#fff" stroke-width="1.100" stroke-linecap="round"/><path d="M17 17l5-9.500" stroke="#111" stroke-width="1" stroke-linecap="round"/></svg>
<svg style="left:853px;top:82.5px;" width="4.5" height="13.5" viewBox="0 0 9 27"><path d="M0 0l8 6-8 6zM9 14l-8 6.500 8 6.500z" fill="#111"/></svg>
</div></body></html>
